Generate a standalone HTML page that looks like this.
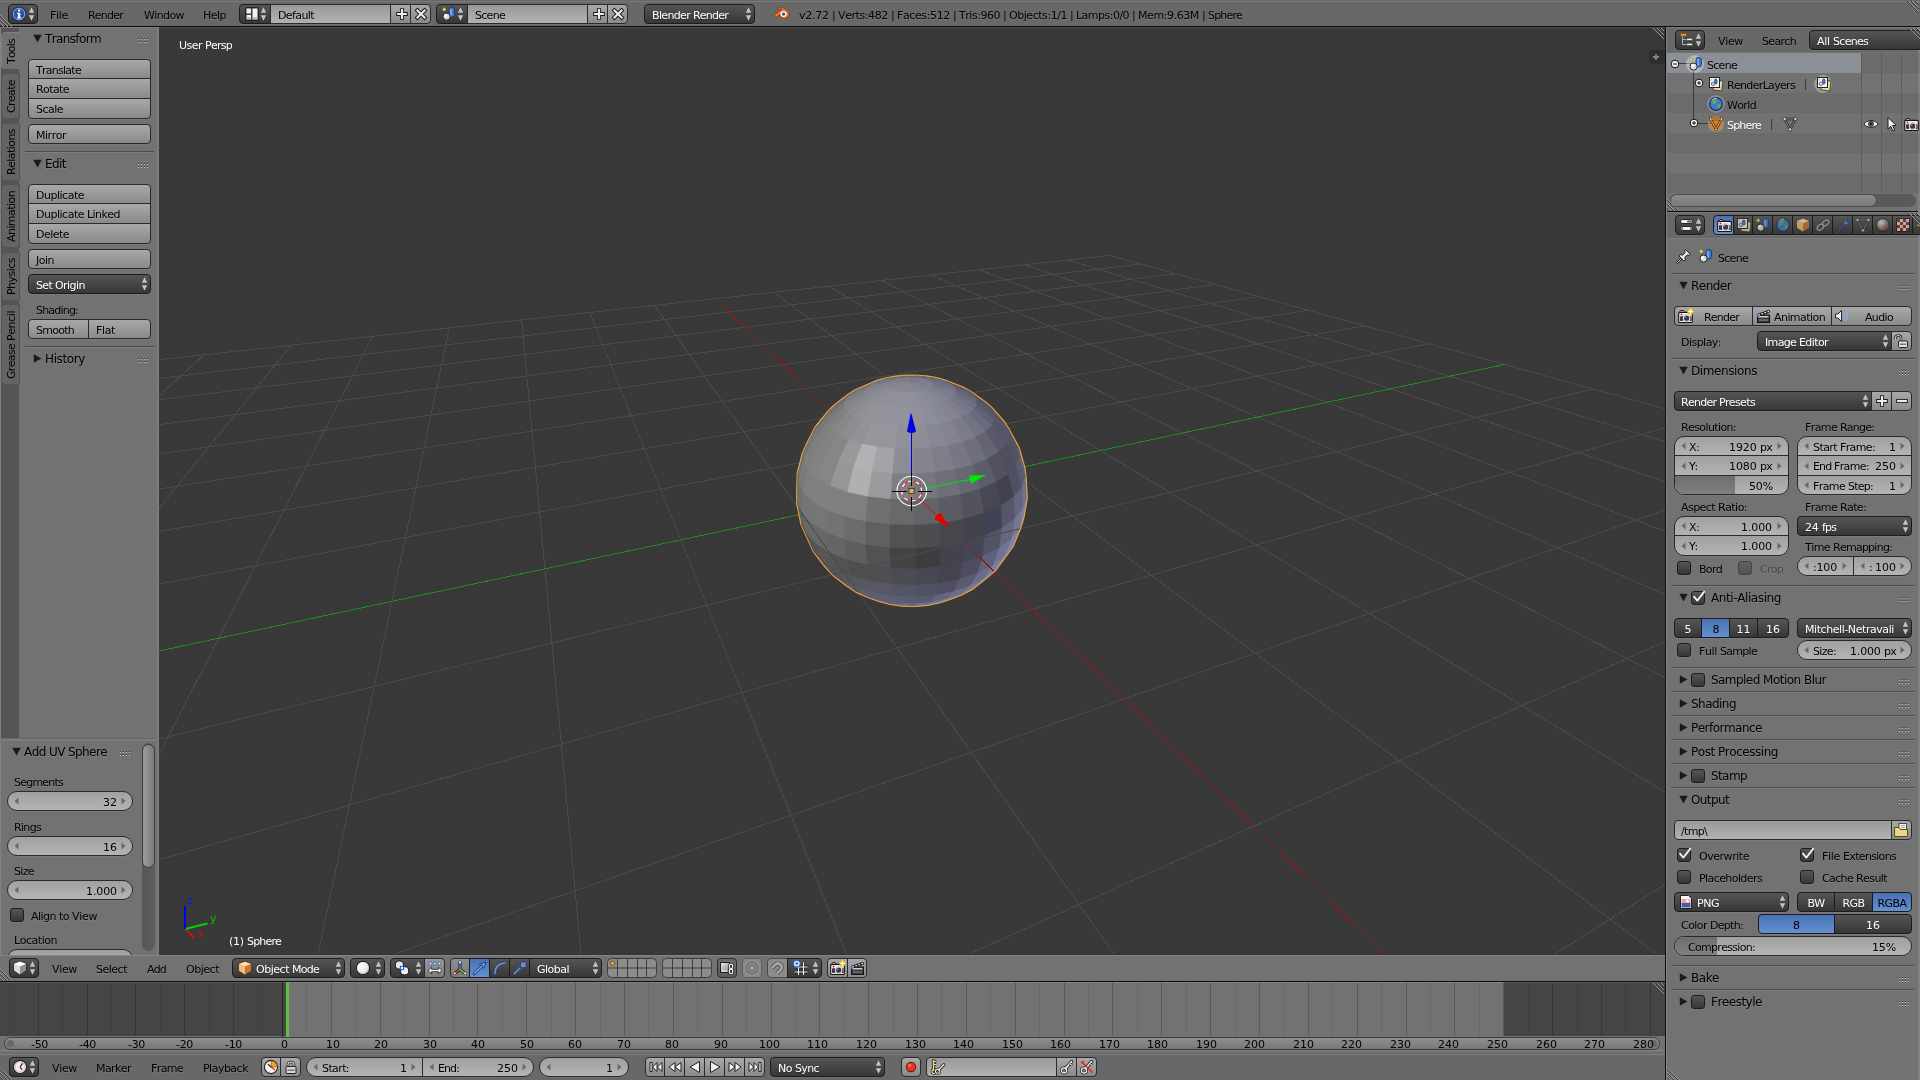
<!DOCTYPE html><html><head><meta charset="utf-8"><title>Blender</title><style>
*{box-sizing:border-box;margin:0;padding:0}
html,body{width:1920px;height:1080px;overflow:hidden;background:#727272}
body{position:relative;font-family:"DejaVu Sans","Liberation Sans",sans-serif;font-size:11px;color:#000;line-height:1;font-kerning:none;font-variant-ligatures:none;white-space:pre}
.a{position:absolute}
.t{position:absolute;white-space:nowrap;line-height:13px;height:13px;text-shadow:0 1px 0 rgba(255,255,255,.12)}
.tw{color:#fff;text-shadow:0 1px 0 rgba(0,0,0,.25)}
.ph{font-size:12px;line-height:14px;height:14px}
.w{position:absolute;border:1px solid #2a2a2a;border-radius:4px;white-space:nowrap;overflow:hidden;box-shadow:0 1px 0 rgba(255,255,255,.06)}
.tool{background:linear-gradient(#a8a8a8,#8a8a8a)}
.menu{background:linear-gradient(#555,#373737);border-color:#1c1c1c;color:#fff}
.radio{background:linear-gradient(#555,#373737);border-color:#1c1c1c;color:#fff}
.radio.sel{background:linear-gradient(#4771b3,#6590d1);color:#000}
.num{background:linear-gradient(#a0a0a0,#b4b4b4);border-radius:10px}
.txt{background:linear-gradient(#999,#b2b2b2)}
.opt{background:linear-gradient(#555,#373737);border-color:#1c1c1c;border-radius:3px}
.icb{background:linear-gradient(#a8a8a8,#8a8a8a)}
.rl{border-top-right-radius:0;border-bottom-right-radius:0}
.rr{border-top-left-radius:0;border-bottom-left-radius:0}
.rn{border-radius:0}
.rt{border-bottom-left-radius:0;border-bottom-right-radius:0}
.rb{border-top-left-radius:0;border-top-right-radius:0}
.hl{position:absolute;height:1px;background:#4c4c4c;box-shadow:0 1px 0 rgba(255,255,255,.09)}
svg{position:absolute;overflow:visible}
i{font-style:normal}.ka{letter-spacing:-0.51px}.kb{letter-spacing:-0.73px}.kc{letter-spacing:-0.27px}.kd{letter-spacing:-0.83px}.ke{letter-spacing:-0.30px}.kf{letter-spacing:-0.78px}.kg{letter-spacing:-0.60px}.kh{letter-spacing:-0.52px}.ki{letter-spacing:-0.71px}.kj{letter-spacing:-0.64px}.kk{letter-spacing:-0.25px}.kl{letter-spacing:-0.41px}.km{letter-spacing:-0.38px}.kn{letter-spacing:-0.47px}.ko{letter-spacing:-0.46px}.kp{letter-spacing:-0.42px}.kq{letter-spacing:-0.79px}.kr{letter-spacing:-0.63px}.ks{letter-spacing:-0.56px}.kt{letter-spacing:-0.53px}.ku{letter-spacing:-0.65px}.kv{letter-spacing:-0.58px}.kw{letter-spacing:-0.49px}.kx{letter-spacing:-0.55px}.ky{letter-spacing:-0.50px}.kz{letter-spacing:-0.54px}.kaa{letter-spacing:-0.80px}.kab{letter-spacing:-0.74px}.kac{letter-spacing:-0.36px}.kad{letter-spacing:-0.59px}.kae{letter-spacing:0.00px}.kaf{letter-spacing:-0.68px}.kag{letter-spacing:-0.10px}.kah{letter-spacing:-0.34px}.kai{letter-spacing:-0.32px}.kaj{letter-spacing:-0.57px}.kak{letter-spacing:-0.61px}.kal{letter-spacing:-0.90px}.kam{letter-spacing:-0.67px}.kan{letter-spacing:-0.28px}.kao{letter-spacing:-0.66px}.kap{letter-spacing:-0.40px}.kaq{letter-spacing:-0.62px}.kar{letter-spacing:-0.75px}.kas{letter-spacing:-1.21px}.kat{letter-spacing:-0.15px}.kau{letter-spacing:-0.85px}.kav{letter-spacing:-0.16px}.kaw{letter-spacing:-0.86px}.kax{letter-spacing:-0.18px}.kay{letter-spacing:-0.70px}.kaz{letter-spacing:-0.43px}.kba{letter-spacing:-0.69px}.kbb{letter-spacing:-0.48px}</style></head><body><div id="root" style="position:absolute;left:0;top:0;width:1920px;height:1080px;will-change:transform">
<div class="a" style="left:0px;top:0px;width:1920px;height:26px;background:#686868;"></div>
<div class="a" style="left:0px;top:1px;width:1920px;height:1px;background:#7a7a7a;"></div>
<div class="a" style="left:0px;top:26px;width:1920px;height:1px;background:#0c0c0c;"></div>
<div class="a" style="left:0px;top:27px;width:1665px;height:928px;background:#727272;"></div>
<svg class="vp" style="position:absolute;left:159px;top:27px;overflow:hidden;background:#393939" width="1506" height="928" viewBox="159 27 1506 928">
<g shape-rendering="crispEdges" stroke-width="1" fill="none">
<path d="M111.8 364.9L1109.7 255.4M111.8 364.9L-65781.7 47569.4M80.2 387.5L1141.2 264.1M204.3 354.7L-50133.6 45980.8M43.0 414.2L1176.1 273.8M291.1 345.2L-35372.7 44482.2M-1.4 446.0L1215.1 284.6M372.6 336.3L-21425.4 43066.3M-55.5 484.7L1258.8 296.6M449.3 327.9L-8226.3 41726.3M-122.5 532.8L1308.3 310.3M521.6 319.9L4283.1 40456.3M-208.0 594.0L1364.6 325.9M589.9 312.4L16155.7 39251.0M-320.8 674.8L1429.4 343.7M654.5 305.4L7273.9 9647.2M-704.4 949.6L1593.1 389.0M773.8 292.3L4257.3 2902.1M-1071.8 1212.8L1698.7 418.1M829.0 286.2L3925.6 2160.5M-1761.8 1707.1L1826.8 453.5M881.5 280.5L3730.8 1725.0M-3531.8 2975.1L1985.7 497.4M931.4 275.0L3602.7 1438.5M-18048.6 13374.6L2187.7 553.2M979.1 269.8L3512.0 1235.7M-42452.0 49611.5L2453.3 626.6M1024.6 264.8L3444.4 1084.6M-10554.2 56060.9L2818.1 727.4M1068.1 260.0L3392.1 967.6M24892.8 49042.5L3350.4 874.4M1109.7 255.4L3350.4 874.4" stroke="#4a4a4a"/>
<path d="M715.7 298.6L4948.4 4447.4" stroke="#8b1a1a"/>
<path d="M-476.3 786.2L1504.6 364.5" stroke="#1e8c1e"/>
</g>
<polygon points="797.5,493.6 798.0,473.4 803.1,453.4 806.9,445.0 815.9,427.2 828.8,411.4 834.4,405.8 849.6,394.1 856.0,390.2 872.1,383.3 877.7,380.9 884.5,379.0 892.1,377.5 900.4,376.5 908.9,376.0 917.6,376.1 925.9,376.7 933.8,377.9 940.8,379.5 946.8,381.6 962.6,387.8 969.5,391.4 984.7,402.3 991.0,407.6 1004.2,422.7 1008.6,429.8 1018.5,448.2 1024.1,467.8 1025.3,477.3 1026.5,497.9 1023.1,517.8 1019.9,528.2 1012.4,546.2 1001.3,561.5 994.6,570.5 981.3,581.3 972.4,588.4 960.9,594.4 949.9,598.6 939.2,602.2 927.4,604.6 914.9,605.7 902.3,605.3 890.2,603.6 879.2,600.6 868.8,597.0 856.5,591.6 846.8,585.1 833.5,574.9 825.6,566.3 814.1,551.5 809.6,541.6 801.6,523.6 797.6,503.8" fill="#8a8a90" stroke="#f6a43c" stroke-width="2.8" stroke-linejoin="round"/>
<g shape-rendering="crispEdges" stroke-width="0.7" stroke-linejoin="round">
<polygon points="910.1,382.1 900.7,377.5 896.7,378.3" fill="#7c7c88" stroke="#7c7c88"/>
<polygon points="910.1,382.1 896.7,378.3 893.2,379.3" fill="#7d7d89" stroke="#7d7d89"/>
<polygon points="910.1,382.1 893.2,379.3 890.3,380.5" fill="#7f7f8a" stroke="#7f7f8a"/>
<polygon points="910.1,382.1 890.3,380.5 888.2,381.8" fill="#80808c" stroke="#80808c"/>
<polygon points="910.1,382.1 888.2,381.8 886.9,383.3" fill="#81818d" stroke="#81818d"/>
<polygon points="910.1,382.1 886.9,383.3 886.4,384.9" fill="#83838e" stroke="#83838e"/>
<polygon points="910.1,382.1 886.4,384.9 886.9,386.4" fill="#84848f" stroke="#84848f"/>
<polygon points="910.1,382.1 886.9,386.4 888.3,387.8" fill="#858591" stroke="#858591"/>
<polygon points="910.1,382.1 888.3,387.8 890.5,389.2" fill="#868692" stroke="#868692"/>
<polygon points="910.1,382.1 890.5,389.2 893.5,390.3" fill="#878793" stroke="#878793"/>
<polygon points="910.1,382.1 893.5,390.3 897.2,391.3" fill="#888894" stroke="#888894"/>
<polygon points="910.1,382.1 897.2,391.3 901.5,391.9" fill="#888894" stroke="#888894"/>
<polygon points="910.1,382.1 901.5,391.9 906.0,392.3" fill="#888894" stroke="#888894"/>
<polygon points="910.1,382.1 906.0,392.3 910.8,392.3" fill="#888894" stroke="#888894"/>
<polygon points="910.1,382.1 910.8,392.3 915.5,392.1" fill="#878794" stroke="#878794"/>
<polygon points="910.1,382.1 915.5,392.1 920.0,391.5" fill="#868794" stroke="#868794"/>
<polygon points="910.1,382.1 920.0,391.5 924.1,390.6" fill="#858693" stroke="#858693"/>
<polygon points="910.1,382.1 924.1,390.6 927.6,389.5" fill="#848592" stroke="#848592"/>
<polygon points="910.1,382.1 927.6,389.5 930.4,388.3" fill="#838391" stroke="#838391"/>
<polygon points="910.1,382.1 930.4,388.3 932.4,386.8" fill="#828290" stroke="#828290"/>
<polygon points="910.1,382.1 932.4,386.8 933.5,385.3" fill="#80808e" stroke="#80808e"/>
<polygon points="910.1,382.1 933.5,385.3 933.7,383.8" fill="#7f7f8d" stroke="#7f7f8d"/>
<polygon points="910.1,382.1 933.7,383.8 933.0,382.3" fill="#7e7e8c" stroke="#7e7e8c"/>
<polygon points="910.1,382.1 933.0,382.3 931.5,380.9" fill="#7c7d8b" stroke="#7c7d8b"/>
<polygon points="910.1,382.1 931.5,380.9 929.1,379.6" fill="#7b7c89" stroke="#7b7c89"/>
<polygon points="910.1,382.1 929.1,379.6 926.0,378.5" fill="#7b7b89" stroke="#7b7b89"/>
<polygon points="910.1,382.1 926.0,378.5 922.4,377.7" fill="#7a7a88" stroke="#7a7a88"/>
<polygon points="910.1,382.1 922.4,377.7 918.3,377.1" fill="#7a7a87" stroke="#7a7a87"/>
<polygon points="910.1,382.1 918.3,377.1 914.0,376.7" fill="#7a7a87" stroke="#7a7a87"/>
<polygon points="910.1,382.1 914.0,376.7 909.4,376.7" fill="#7a7a87" stroke="#7a7a87"/>
<polygon points="910.1,382.1 909.4,376.7 905.0,376.9" fill="#7a7b87" stroke="#7a7b87"/>
<polygon points="910.1,382.1 905.0,376.9 900.7,377.5" fill="#7b7b88" stroke="#7b7b88"/>
<polygon points="900.7,377.5 892.1,377.5 884.5,379.0 896.7,378.3" fill="#6e6e78" stroke="#6e6e78"/>
<polygon points="896.7,378.3 884.5,379.0 877.7,380.9 893.2,379.3" fill="#71717b" stroke="#71717b"/>
<polygon points="893.2,379.3 877.7,380.9 872.1,383.3 890.3,380.5" fill="#75757e" stroke="#75757e"/>
<polygon points="890.3,380.5 872.1,383.3 867.8,386.0 888.2,381.8" fill="#797982" stroke="#797982"/>
<polygon points="888.2,381.8 867.8,386.0 865.0,388.9 886.9,383.3" fill="#7d7d86" stroke="#7d7d86"/>
<polygon points="886.9,383.3 865.0,388.9 863.9,391.9 886.4,384.9" fill="#81828a" stroke="#81828a"/>
<polygon points="886.4,384.9 863.9,391.9 864.6,395.0 886.9,386.4" fill="#85858e" stroke="#85858e"/>
<polygon points="886.9,386.4 864.6,395.0 867.1,397.9 888.3,387.8" fill="#898991" stroke="#898991"/>
<polygon points="888.3,387.8 867.1,397.9 871.4,400.7 890.5,389.2" fill="#8c8c95" stroke="#8c8c95"/>
<polygon points="890.5,389.2 871.4,400.7 877.3,403.1 893.5,390.3" fill="#8e8e97" stroke="#8e8e97"/>
<polygon points="893.5,390.3 877.3,403.1 884.5,405.0 897.2,391.3" fill="#90909a" stroke="#90909a"/>
<polygon points="897.2,391.3 884.5,405.0 892.9,406.4 901.5,391.9" fill="#91919b" stroke="#91919b"/>
<polygon points="901.5,391.9 892.9,406.4 902.1,407.2 906.0,392.3" fill="#91919c" stroke="#91919c"/>
<polygon points="906.0,392.3 902.1,407.2 911.6,407.3 910.8,392.3" fill="#90909c" stroke="#90909c"/>
<polygon points="910.8,392.3 911.6,407.3 921.0,406.7 915.5,392.1" fill="#8f8f9c" stroke="#8f8f9c"/>
<polygon points="915.5,392.1 921.0,406.7 930.0,405.5 920.0,391.5" fill="#8c8d9a" stroke="#8c8d9a"/>
<polygon points="920.0,391.5 930.0,405.5 938.1,403.8 924.1,390.6" fill="#8a8a98" stroke="#8a8a98"/>
<polygon points="924.1,390.6 938.1,403.8 945.0,401.5 927.6,389.5" fill="#868695" stroke="#868695"/>
<polygon points="927.6,389.5 945.0,401.5 950.4,398.9 930.4,388.3" fill="#828392" stroke="#828392"/>
<polygon points="930.4,388.3 950.4,398.9 954.2,395.9 932.4,386.8" fill="#7e7f8e" stroke="#7e7f8e"/>
<polygon points="932.4,386.8 954.2,395.9 956.2,392.9 933.5,385.3" fill="#7a7b8b" stroke="#7a7b8b"/>
<polygon points="933.5,385.3 956.2,392.9 956.3,389.8 933.7,383.8" fill="#767687" stroke="#767687"/>
<polygon points="933.7,383.8 956.3,389.8 954.8,386.8 933.0,382.3" fill="#727383" stroke="#727383"/>
<polygon points="933.0,382.3 954.8,386.8 951.5,384.1 931.5,380.9" fill="#6f6f7f" stroke="#6f6f7f"/>
<polygon points="931.5,380.9 951.5,384.1 946.8,381.6 929.1,379.6" fill="#6c6c7c" stroke="#6c6c7c"/>
<polygon points="929.1,379.6 946.8,381.6 940.8,379.5 926.0,378.5" fill="#696a79" stroke="#696a79"/>
<polygon points="926.0,378.5 940.8,379.5 933.8,377.9 922.4,377.7" fill="#686877" stroke="#686877"/>
<polygon points="922.4,377.7 933.8,377.9 925.9,376.7 918.3,377.1" fill="#676775" stroke="#676775"/>
<polygon points="918.3,377.1 925.9,376.7 917.6,376.1 914.0,376.7" fill="#676774" stroke="#676774"/>
<polygon points="914.0,376.7 917.6,376.1 908.9,376.0 909.4,376.7" fill="#676874" stroke="#676874"/>
<polygon points="909.4,376.7 908.9,376.0 900.4,376.5 905.0,376.9" fill="#696975" stroke="#696975"/>
<polygon points="905.0,376.9 900.4,376.5 892.1,377.5 900.7,377.5" fill="#6b6b76" stroke="#6b6b76"/>
<polygon points="872.1,383.3 856.0,390.2 849.6,394.1 867.8,386.0" fill="#6e6e73" stroke="#6e6e73"/>
<polygon points="867.8,386.0 849.6,394.1 845.4,398.4 865.0,388.9" fill="#747579" stroke="#747579"/>
<polygon points="865.0,388.9 845.4,398.4 843.6,402.9 863.9,391.9" fill="#7b7b80" stroke="#7b7b80"/>
<polygon points="863.9,391.9 843.6,402.9 844.3,407.5 864.6,395.0" fill="#818186" stroke="#818186"/>
<polygon points="864.6,395.0 844.3,407.5 847.6,412.0 867.1,397.9" fill="#87878c" stroke="#87878c"/>
<polygon points="867.1,397.9 847.6,412.0 853.6,416.2 871.4,400.7" fill="#8c8c91" stroke="#8c8c91"/>
<polygon points="871.4,400.7 853.6,416.2 862.0,419.9 877.3,403.1" fill="#909096" stroke="#909096"/>
<polygon points="877.3,403.1 862.0,419.9 872.6,422.9 884.5,405.0" fill="#93939a" stroke="#93939a"/>
<polygon points="884.5,405.0 872.6,422.9 884.9,425.1 892.9,406.4" fill="#94949c" stroke="#94949c"/>
<polygon points="892.9,406.4 884.9,425.1 898.4,426.3 902.1,407.2" fill="#94949e" stroke="#94949e"/>
<polygon points="902.1,407.2 898.4,426.3 912.4,426.5 911.6,407.3" fill="#93939e" stroke="#93939e"/>
<polygon points="911.6,407.3 912.4,426.5 926.4,425.6 921.0,406.7" fill="#91919d" stroke="#91919d"/>
<polygon points="921.0,406.7 926.4,425.6 939.6,423.8 930.0,405.5" fill="#8d8d9b" stroke="#8d8d9b"/>
<polygon points="930.0,405.5 939.6,423.8 951.4,421.0 938.1,403.8" fill="#888997" stroke="#888997"/>
<polygon points="938.1,403.8 951.4,421.0 961.4,417.6 945.0,401.5" fill="#838393" stroke="#838393"/>
<polygon points="945.0,401.5 961.4,417.6 969.1,413.5 950.4,398.9" fill="#7d7d8e" stroke="#7d7d8e"/>
<polygon points="950.4,398.9 969.1,413.5 974.4,409.1 954.2,395.9" fill="#767788" stroke="#767788"/>
<polygon points="954.2,395.9 974.4,409.1 977.0,404.5 956.2,392.9" fill="#707081" stroke="#707081"/>
<polygon points="956.2,392.9 977.0,404.5 976.9,399.9 956.3,389.8" fill="#69697b" stroke="#69697b"/>
<polygon points="956.3,389.8 976.9,399.9 974.4,395.4 954.8,386.8" fill="#636375" stroke="#636375"/>
<polygon points="954.8,386.8 974.4,395.4 969.5,391.4 951.5,384.1" fill="#5d5d6f" stroke="#5d5d6f"/>
<polygon points="951.5,384.1 969.5,391.4 962.6,387.8 946.8,381.6" fill="#585869" stroke="#585869"/>
<polygon points="849.6,394.1 834.4,405.8 828.8,411.4 845.4,398.4" fill="#676768" stroke="#676768"/>
<polygon points="845.4,398.4 828.8,411.4 826.2,417.4 843.6,402.9" fill="#707071" stroke="#707071"/>
<polygon points="843.6,402.9 826.2,417.4 826.8,423.4 844.3,407.5" fill="#797979" stroke="#797979"/>
<polygon points="844.3,407.5 826.8,423.4 830.8,429.4 847.6,412.0" fill="#808082" stroke="#808082"/>
<polygon points="847.6,412.0 830.8,429.4 838.1,435.1 853.6,416.2" fill="#878789" stroke="#878789"/>
<polygon points="853.6,416.2 838.1,435.1 848.6,440.1 862.0,419.9" fill="#8c8c8f" stroke="#8c8c8f"/>
<polygon points="862.0,419.9 848.6,440.1 862.1,444.2 872.6,422.9" fill="#929296" stroke="#929296"/>
<polygon points="872.6,422.9 862.1,444.2 877.8,447.1 884.9,425.1" fill="#96969c" stroke="#96969c"/>
<polygon points="884.9,425.1 877.8,447.1 895.1,448.8 898.4,426.3" fill="#95959c" stroke="#95959c"/>
<polygon points="898.4,426.3 895.1,448.8 913.2,449.1 912.4,426.5" fill="#91919a" stroke="#91919a"/>
<polygon points="912.4,426.5 913.2,449.1 931.2,447.9 926.4,425.6" fill="#8d8d98" stroke="#8d8d98"/>
<polygon points="926.4,425.6 931.2,447.9 948.2,445.4 939.6,423.8" fill="#888895" stroke="#888895"/>
<polygon points="939.6,423.8 948.2,445.4 963.3,441.7 951.4,421.0" fill="#828290" stroke="#828290"/>
<polygon points="951.4,421.0 963.3,441.7 975.9,437.0 961.4,417.6" fill="#7b7b8b" stroke="#7b7b8b"/>
<polygon points="961.4,417.6 975.9,437.0 985.6,431.5 969.1,413.5" fill="#727383" stroke="#727383"/>
<polygon points="969.1,413.5 985.6,431.5 992.0,425.6 974.4,409.1" fill="#6a6a7c" stroke="#6a6a7c"/>
<polygon points="974.4,409.1 992.0,425.6 994.9,419.5 977.0,404.5" fill="#606173" stroke="#606173"/>
<polygon points="977.0,404.5 994.9,419.5 994.6,413.4 976.9,399.9" fill="#58586b" stroke="#58586b"/>
<polygon points="976.9,399.9 994.6,413.4 991.0,407.6 974.4,395.4" fill="#555668" stroke="#555668"/>
<polygon points="974.4,395.4 991.0,407.6 984.7,402.3 969.5,391.4" fill="#545466" stroke="#545466"/>
<polygon points="828.8,411.4 815.9,427.2 812.5,434.4 826.2,417.4" fill="#6d6d6d" stroke="#6d6d6d"/>
<polygon points="826.2,417.4 812.5,434.4 813.0,441.9 826.8,423.4" fill="#787878" stroke="#787878"/>
<polygon points="826.8,423.4 813.0,441.9 817.3,449.3 830.8,429.4" fill="#7f7f7f" stroke="#7f7f7f"/>
<polygon points="830.8,429.4 817.3,449.3 825.7,456.3 838.1,435.1" fill="#838383" stroke="#838383"/>
<polygon points="838.1,435.1 825.7,456.3 837.9,462.6 848.6,440.1" fill="#868686" stroke="#868686"/>
<polygon points="848.6,440.1 837.9,462.6 853.6,467.8 862.1,444.2" fill="#99999a" stroke="#99999a"/>
<polygon points="862.1,444.2 853.6,467.8 872.1,471.5 877.8,447.1" fill="#b2b2b5" stroke="#b2b2b5"/>
<polygon points="877.8,447.1 872.1,471.5 892.6,473.7 895.1,448.8" fill="#a3a3a8" stroke="#a3a3a8"/>
<polygon points="895.1,448.8 892.6,473.7 914.0,474.0 913.2,449.1" fill="#8c8c94" stroke="#8c8c94"/>
<polygon points="913.2,449.1 914.0,474.0 935.3,472.6 931.2,447.9" fill="#84848e" stroke="#84848e"/>
<polygon points="931.2,447.9 935.3,472.6 955.3,469.5 948.2,445.4" fill="#7e7e8a" stroke="#7e7e8a"/>
<polygon points="948.2,445.4 955.3,469.5 973.1,464.8 963.3,441.7" fill="#777784" stroke="#777784"/>
<polygon points="963.3,441.7 973.1,464.8 987.8,458.9 975.9,437.0" fill="#6e6e7d" stroke="#6e6e7d"/>
<polygon points="975.9,437.0 987.8,458.9 998.9,452.1 985.6,431.5" fill="#646474" stroke="#646474"/>
<polygon points="985.6,431.5 998.9,452.1 1006.1,444.7 992.0,425.6" fill="#59596b" stroke="#59596b"/>
<polygon points="992.0,425.6 1006.1,444.7 1009.3,437.2 994.9,419.5" fill="#555567" stroke="#555567"/>
<polygon points="994.9,419.5 1009.3,437.2 1008.6,429.8 994.6,413.4" fill="#565769" stroke="#565769"/>
<polygon points="994.6,413.4 1008.6,429.8 1004.2,422.7 991.0,407.6" fill="#565669" stroke="#565669"/>
<polygon points="815.9,427.2 806.9,445.0 803.1,453.4 812.5,434.4" fill="#6b6b6b" stroke="#6b6b6b"/>
<polygon points="812.5,434.4 803.1,453.4 803.3,462.1 813.0,441.9" fill="#767676" stroke="#767676"/>
<polygon points="813.0,441.9 803.3,462.1 807.9,470.8 817.3,449.3" fill="#7f7f7f" stroke="#7f7f7f"/>
<polygon points="817.3,449.3 807.9,470.8 816.9,479.0 825.7,456.3" fill="#838383" stroke="#838383"/>
<polygon points="825.7,456.3 816.9,479.0 830.3,486.3 837.9,462.6" fill="#868686" stroke="#868686"/>
<polygon points="837.9,462.6 830.3,486.3 847.6,492.4 853.6,467.8" fill="#969696" stroke="#969696"/>
<polygon points="853.6,467.8 847.6,492.4 868.1,496.9 872.1,471.5" fill="#b0b0b0" stroke="#b0b0b0"/>
<polygon points="872.1,471.5 868.1,496.9 890.8,499.4 892.6,473.7" fill="#9b9b9d" stroke="#9b9b9d"/>
<polygon points="892.6,473.7 890.8,499.4 914.7,499.9 914.0,474.0" fill="#7e7f84" stroke="#7e7f84"/>
<polygon points="914.0,474.0 914.7,499.9 938.3,498.2 935.3,472.6" fill="#76767e" stroke="#76767e"/>
<polygon points="935.3,472.6 938.3,498.2 960.6,494.5 955.3,469.5" fill="#6f6f79" stroke="#6f6f79"/>
<polygon points="955.3,469.5 960.6,494.5 980.2,489.0 973.1,464.8" fill="#676773" stroke="#676773"/>
<polygon points="973.1,464.8 980.2,489.0 996.4,482.1 987.8,458.9" fill="#5c5d6b" stroke="#5c5d6b"/>
<polygon points="987.8,458.9 996.4,482.1 1008.6,474.2 998.9,452.1" fill="#515161" stroke="#515161"/>
<polygon points="998.9,452.1 1008.6,474.2 1016.3,465.6 1006.1,444.7" fill="#4e4e5f" stroke="#4e4e5f"/>
<polygon points="1006.1,444.7 1016.3,465.6 1019.6,456.8 1009.3,437.2" fill="#525264" stroke="#525264"/>
<polygon points="1009.3,437.2 1019.6,456.8 1018.5,448.2 1008.6,429.8" fill="#545466" stroke="#545466"/>
<polygon points="803.1,453.4 798.0,473.4 798.2,483.1 803.3,462.1" fill="#717171" stroke="#717171"/>
<polygon points="803.3,462.1 798.2,483.1 802.9,492.6 807.9,470.8" fill="#7a7a7a" stroke="#7a7a7a"/>
<polygon points="807.9,470.8 802.9,492.6 812.3,501.8 816.9,479.0" fill="#7f7f7f" stroke="#7f7f7f"/>
<polygon points="816.9,479.0 812.3,501.8 826.3,510.0 830.3,486.3" fill="#808080" stroke="#808080"/>
<polygon points="830.3,486.3 826.3,510.0 844.4,516.8 847.6,492.4" fill="#808080" stroke="#808080"/>
<polygon points="847.6,492.4 844.4,516.8 866.0,521.8 868.1,496.9" fill="#7f7f7f" stroke="#7f7f7f"/>
<polygon points="868.1,496.9 866.0,521.8 890.1,524.7 890.8,499.4" fill="#707070" stroke="#707070"/>
<polygon points="890.8,499.4 890.1,524.7 915.2,525.3 914.7,499.9" fill="#69696c" stroke="#69696c"/>
<polygon points="914.7,499.9 915.2,525.3 940.2,523.4 938.3,498.2" fill="#636469" stroke="#636469"/>
<polygon points="938.3,498.2 940.2,523.4 963.6,519.3 960.6,494.5" fill="#5c5c64" stroke="#5c5c64"/>
<polygon points="960.6,494.5 963.6,519.3 984.3,513.2 980.2,489.0" fill="#53535d" stroke="#53535d"/>
<polygon points="980.2,489.0 984.3,513.2 1001.3,505.5 996.4,482.1" fill="#484854" stroke="#484854"/>
<polygon points="996.4,482.1 1001.3,505.5 1014.0,496.6 1008.6,474.2" fill="#41414f" stroke="#41414f"/>
<polygon points="1008.6,474.2 1014.0,496.6 1022.0,487.1 1016.3,465.6" fill="#4f5062" stroke="#4f5062"/>
<polygon points="1016.3,465.6 1022.0,487.1 1025.3,477.3 1019.6,456.8" fill="#5b5b70" stroke="#5b5b70"/>
<polygon points="1019.6,456.8 1025.3,477.3 1024.1,467.8 1018.5,448.2" fill="#616278" stroke="#616278"/>
<polygon points="798.0,473.4 797.5,493.6 797.6,503.8 798.2,483.1" fill="#676767" stroke="#676767"/>
<polygon points="798.2,483.1 797.6,503.8 802.4,514.0 802.9,492.6" fill="#707070" stroke="#707070"/>
<polygon points="802.9,492.6 802.4,514.0 811.8,523.7 812.3,501.8" fill="#757575" stroke="#757575"/>
<polygon points="812.3,501.8 811.8,523.7 825.9,532.4 826.3,510.0" fill="#767676" stroke="#767676"/>
<polygon points="826.3,510.0 825.9,532.4 844.2,539.7 844.4,516.8" fill="#737373" stroke="#737373"/>
<polygon points="844.4,516.8 844.2,539.7 866.0,545.0 866.0,521.8" fill="#6c6c6c" stroke="#6c6c6c"/>
<polygon points="866.0,521.8 866.0,545.0 890.2,548.1 890.1,524.7" fill="#606060" stroke="#606060"/>
<polygon points="890.1,524.7 890.2,548.1 915.6,548.7 915.2,525.3" fill="#525252" stroke="#525252"/>
<polygon points="915.2,525.3 915.6,548.7 940.8,546.7 940.2,523.4" fill="#4d4d50" stroke="#4d4d50"/>
<polygon points="940.2,523.4 940.8,546.7 964.4,542.4 963.6,519.3" fill="#46464b" stroke="#46464b"/>
<polygon points="963.6,519.3 964.4,542.4 985.2,535.9 984.3,513.2" fill="#42424c" stroke="#42424c"/>
<polygon points="984.3,513.2 985.2,535.9 1002.4,527.8 1001.3,505.5" fill="#424352" stroke="#424352"/>
<polygon points="1001.3,505.5 1002.4,527.8 1015.1,518.4 1014.0,496.6" fill="#545669" stroke="#545669"/>
<polygon points="1014.0,496.6 1015.1,518.4 1023.2,508.3 1022.0,487.1" fill="#64667d" stroke="#64667d"/>
<polygon points="1022.0,487.1 1023.2,508.3 1026.5,497.9 1025.3,477.3" fill="#70728c" stroke="#70728c"/>
<polygon points="797.6,503.8 801.6,523.6 806.2,533.9 802.4,514.0" fill="#626262" stroke="#626262"/>
<polygon points="802.4,514.0 806.2,533.9 815.5,543.7 811.8,523.7" fill="#676767" stroke="#676767"/>
<polygon points="811.8,523.7 815.5,543.7 829.2,552.5 825.9,532.4" fill="#686868" stroke="#686868"/>
<polygon points="825.9,532.4 829.2,552.5 846.9,559.9 844.2,539.7" fill="#656565" stroke="#656565"/>
<polygon points="844.2,539.7 846.9,559.9 867.9,565.3 866.0,545.0" fill="#5e5e5e" stroke="#5e5e5e"/>
<polygon points="866.0,545.0 867.9,565.3 891.3,568.4 890.2,548.1" fill="#525252" stroke="#525252"/>
<polygon points="890.2,548.1 891.3,568.4 915.8,569.0 915.6,548.7" fill="#444444" stroke="#444444"/>
<polygon points="915.6,548.7 915.8,569.0 940.1,567.0 940.8,546.7" fill="#3d3d40" stroke="#3d3d40"/>
<polygon points="940.8,546.7 940.1,567.0 962.9,562.7 964.4,542.4" fill="#42434b" stroke="#42434b"/>
<polygon points="964.4,542.4 962.9,562.7 983.1,556.2 985.2,535.9" fill="#454655" stroke="#454655"/>
<polygon points="985.2,535.9 983.1,556.2 999.6,547.9 1002.4,527.8" fill="#525467" stroke="#525467"/>
<polygon points="1002.4,527.8 999.6,547.9 1012.0,538.4 1015.1,518.4" fill="#656780" stroke="#656780"/>
<polygon points="1015.1,518.4 1012.0,538.4 1019.9,528.2 1023.2,508.3" fill="#757893" stroke="#757893"/>
<polygon points="1023.2,508.3 1019.9,528.2 1023.1,517.8 1026.5,497.9" fill="#8083a2" stroke="#8083a2"/>
<polygon points="801.6,523.6 809.6,541.6 814.1,551.5 806.2,533.9" fill="#505050" stroke="#505050"/>
<polygon points="806.2,533.9 814.1,551.5 822.8,561.0 815.5,543.7" fill="#555555" stroke="#555555"/>
<polygon points="815.5,543.7 822.8,561.0 835.6,569.5 829.2,552.5" fill="#565656" stroke="#565656"/>
<polygon points="829.2,552.5 835.6,569.5 852.1,576.5 846.9,559.9" fill="#535353" stroke="#535353"/>
<polygon points="846.9,559.9 852.1,576.5 871.6,581.7 867.9,565.3" fill="#4e4f4f" stroke="#4e4f4f"/>
<polygon points="867.9,565.3 871.6,581.7 893.2,584.6 891.3,568.4" fill="#4e4f52" stroke="#4e4f52"/>
<polygon points="891.3,568.4 893.2,584.6 915.8,585.2 915.8,569.0" fill="#4b4c53" stroke="#4b4c53"/>
<polygon points="915.8,569.0 915.8,585.2 938.2,583.4 940.1,567.0" fill="#474851" stroke="#474851"/>
<polygon points="940.1,567.0 938.2,583.4 959.3,579.2 962.9,562.7" fill="#444451" stroke="#444451"/>
<polygon points="962.9,562.7 959.3,579.2 978.0,573.0 983.1,556.2" fill="#4d4d5f" stroke="#4d4d5f"/>
<polygon points="983.1,556.2 978.0,573.0 993.4,565.1 999.6,547.9" fill="#60627a" stroke="#60627a"/>
<polygon points="999.6,547.9 993.4,565.1 1005.0,556.0 1012.0,538.4" fill="#727591" stroke="#727591"/>
<polygon points="1012.0,538.4 1005.0,556.0 1012.4,546.2 1019.9,528.2" fill="#8185a4" stroke="#8185a4"/>
<polygon points="814.1,551.5 825.6,566.3 833.5,574.9 822.8,561.0" fill="#4c4d50" stroke="#4c4d50"/>
<polygon points="822.8,561.0 833.5,574.9 844.9,582.6 835.6,569.5" fill="#525357" stroke="#525357"/>
<polygon points="835.6,569.5 844.9,582.6 859.6,589.0 852.1,576.5" fill="#56565c" stroke="#56565c"/>
<polygon points="852.1,576.5 859.6,589.0 876.8,593.6 871.6,581.7" fill="#575860" stroke="#575860"/>
<polygon points="871.6,581.7 876.8,593.6 895.8,596.3 893.2,584.6" fill="#575863" stroke="#575863"/>
<polygon points="893.2,584.6 895.8,596.3 915.7,596.9 915.8,585.2" fill="#545664" stroke="#545664"/>
<polygon points="915.8,585.2 915.7,596.9 935.4,595.2 938.2,583.4" fill="#515263" stroke="#515263"/>
<polygon points="938.2,583.4 935.4,595.2 953.9,591.5 959.3,579.2" fill="#4f4d60" stroke="#4f4d60"/>
<polygon points="959.3,579.2 953.9,591.5 970.4,585.9 978.0,573.0" fill="#5d596f" stroke="#5d596f"/>
<polygon points="978.0,573.0 970.4,585.9 984.2,578.7 993.4,565.1" fill="#6c6d88" stroke="#6c6d88"/>
<polygon points="993.4,565.1 984.2,578.7 994.6,570.5 1005.0,556.0" fill="#7b7f9d" stroke="#7b7f9d"/>
<polygon points="1005.0,556.0 994.6,570.5 1001.3,561.5 1012.4,546.2" fill="#888daf" stroke="#888daf"/>
<polygon points="833.5,574.9 846.8,585.1 856.5,591.6 844.9,582.6" fill="#585a66" stroke="#585a66"/>
<polygon points="844.9,582.6 856.5,591.6 868.8,597.0 859.6,589.0" fill="#5b5d6a" stroke="#5b5d6a"/>
<polygon points="859.6,589.0 868.8,597.0 883.1,600.9 876.8,593.6" fill="#5c5f6e" stroke="#5c5f6e"/>
<polygon points="876.8,593.6 883.1,600.9 898.9,603.2 895.8,596.3" fill="#5c5f70" stroke="#5c5f70"/>
<polygon points="895.8,596.3 898.9,603.2 915.4,603.7 915.7,596.9" fill="#5a5d71" stroke="#5a5d71"/>
<polygon points="915.7,596.9 915.4,603.7 931.7,602.3 935.4,595.2" fill="#575a71" stroke="#575a71"/>
<polygon points="935.4,595.2 931.7,602.3 947.1,599.1 953.9,591.5" fill="#63657e" stroke="#63657e"/>
<polygon points="953.9,591.5 947.1,599.1 960.9,594.4 970.4,585.9" fill="#6d6f8a" stroke="#6d6f8a"/>
<polygon points="970.4,585.9 960.9,594.4 972.4,588.4 984.2,578.7" fill="#757996" stroke="#757996"/>
<polygon points="984.2,578.7 972.4,588.4 981.3,581.3 994.6,570.5" fill="#7e83a4" stroke="#7e83a4"/>
<polygon points="868.8,597.0 879.2,600.6 890.2,603.6 883.1,600.9" fill="#5e6277" stroke="#5e6277"/>
<polygon points="883.1,600.9 890.2,603.6 902.3,605.3 898.9,603.2" fill="#5e6279" stroke="#5e6279"/>
<polygon points="898.9,603.2 902.3,605.3 914.9,605.7 915.4,603.7" fill="#646881" stroke="#646881"/>
<polygon points="915.4,603.7 914.9,605.7 927.4,604.6 931.7,602.3" fill="#6c708b" stroke="#6c708b"/>
<polygon points="931.7,602.3 927.4,604.6 939.2,602.2 947.1,599.1" fill="#747996" stroke="#747996"/>
<polygon points="947.1,599.1 939.2,602.2 949.9,598.6 960.9,594.4" fill="#7c81a1" stroke="#7c81a1"/>
</g>
<g shape-rendering="crispEdges" stroke-width="1" fill="none">
<clipPath id="sph"><polygon points="797.5,493.6 798.0,473.4 803.1,453.4 806.9,445.0 815.9,427.2 828.8,411.4 834.4,405.8 849.6,394.1 856.0,390.2 872.1,383.3 877.7,380.9 884.5,379.0 892.1,377.5 900.4,376.5 908.9,376.0 917.6,376.1 925.9,376.7 933.8,377.9 940.8,379.5 946.8,381.6 962.6,387.8 969.5,391.4 984.7,402.3 991.0,407.6 1004.2,422.7 1008.6,429.8 1018.5,448.2 1024.1,467.8 1025.3,477.3 1026.5,497.9 1023.1,517.8 1019.9,528.2 1012.4,546.2 1001.3,561.5 994.6,570.5 981.3,581.3 972.4,588.4 960.9,594.4 949.9,598.6 939.2,602.2 927.4,604.6 914.9,605.7 902.3,605.3 890.2,603.6 879.2,600.6 868.8,597.0 856.5,591.6 846.8,585.1 833.5,574.9 825.6,566.3 814.1,551.5 809.6,541.6 801.6,523.6 797.6,503.8"/></clipPath>
<g clip-path="url(#sph)">
<path d="M-208.0 594.0L822.3 418.3M972.7 392.7L1364.6 325.9" stroke="#4a4a4a"/>
<path d="M589.9 312.4L23764.5 58284.9" stroke="#4a4a4a"/>
<path d="M-320.8 674.8L799.9 462.8M1006.0 423.8L1429.4 343.7" stroke="#4a4a4a"/>
<path d="M654.5 305.4L7273.9 9647.2" stroke="#4a4a4a"/>
<path d="M-704.4 949.6L1593.1 389.0" stroke="#4a4a4a"/>
<path d="M773.8 292.3L888.1 377.9M1026.5 481.6L4257.3 2902.1" stroke="#4a4a4a"/>
<path d="M-1071.8 1212.8L1698.7 418.1" stroke="#4a4a4a"/>
<path d="M829.0 286.2L3925.6 2160.5" stroke="#4a4a4a"/>
<path d="M715.7 298.6L829.4 410.1M964.4 542.4L4948.4 4447.4" stroke="#8b1a1a"/>
<path d="M-476.3 786.2L802.4 514.0M1024.6 466.7L1504.6 364.5" stroke="#1e8c1e"/>
</g></g>

<g shape-rendering="crispEdges" fill="none" stroke-width="1">
<path d="M911.5 471V431" stroke="#0000e6"/>
<path d="M925 488.5L971 479.2" stroke="#00e600" shape-rendering="auto"/>
<path d="M919 498.5L938 517" stroke="#e60000" shape-rendering="auto"/>
</g>
<path d="M907 431.5L910.6 413.5H911.4L916 431.5C913 433.5 910 433.5 907 431.5z" fill="#0000e6"/>
<path d="M969.5 475.5L986.2 475L971.5 483.5C969.5 481.5 969 478.5 969.5 475.5z" fill="#00e600"/>
<path d="M940.5 512.8L949.8 527.8L934.6 519.2C935.5 516 938 513.5 940.5 512.8z" fill="#e60000"/>
<circle cx="911.7" cy="491" r="14.8" fill="none" stroke="#fff" stroke-width="1.1"/>
<circle cx="911.7" cy="491" r="10" fill="none" stroke="#fff" stroke-width="1.2"/>
<circle cx="911.7" cy="491" r="10" fill="none" stroke="#e61010" stroke-width="1.2" stroke-dasharray="3.93 3.93"/>
<path d="M892 491.5H906.5M917.5 491.5H932M911.5 470.5V485.5M911.5 496.5V511" stroke="#000" stroke-width="1" shape-rendering="crispEdges"/>
<rect x="909" y="488.5" width="5" height="5" fill="#f0aa50" stroke="#3a2a10" stroke-width=".8"/>
<g stroke-width="2" shape-rendering="crispEdges">
<path d="M185 929L195 938.5" stroke="#c81414" shape-rendering="auto"/>
<path d="M185 929L207.5 923.5" stroke="#00d200" shape-rendering="auto"/>
<path d="M185 929V906" stroke="#0000f0"/>
</g>
<g font-family="DejaVu Sans,Liberation Sans,sans-serif" font-size="11">
<text x="187" y="904" fill="#1414f0">z</text>
<text x="210" y="922" fill="#00c800">y</text>
<text x="198" y="937" fill="#c81414">x</text>
</g>

</svg>
<div class="a" style="left:159px;top:27px;width:1506px;height:1px;background:#4e4e4e;"></div>
<div class="t tw" style="left:179px;top:39px;text-shadow:none"><i class="ka">User </i><i class="kb">Persp</i></div>
<div class="t tw" style="left:229px;top:935px;text-shadow:none"><i class="kc">(1) </i><i class="kd">Sphere</i></div>
<div class="a" style="left:0px;top:27px;width:159px;height:712px;background:#727272;"></div>
<div class="a" style="left:0px;top:27px;width:19px;height:712px;background:#555;"></div>
<div class="a" style="left:157px;top:27px;width:2px;height:928px;background:#7b7b7b;"></div>
<div class="a" style="left:0px;top:27px;width:159px;height:1px;background:#7e7e7e;"></div>
<div class="a" style="left:0px;top:738px;width:157px;height:1px;background:#686868;"></div>
<div class="a" style="left:0px;top:739px;width:157px;height:2px;background:#7d7d7d;"></div>
<div class="a" style="left:0px;top:741px;width:157px;height:214px;background:#727272;"></div>
<div class="a" style="left:0px;top:27px;width:1px;height:1053px;background:#818181;"></div>
<div class="a" style="left:0px;top:955px;width:1665px;height:26px;background:#727272;"></div>
<div class="a" style="left:159px;top:954px;width:1506px;height:1px;background:#333;"></div>
<div class="a" style="left:0px;top:955px;width:1665px;height:1px;background:#868686;"></div>
<div class="a" style="left:0px;top:981px;width:1665px;height:1px;background:#0c0c0c;"></div>
<div class="a" style="left:0px;top:982px;width:1665px;height:73px;background:#727272;"></div>
<div class="a" style="left:0px;top:1055px;width:1665px;height:25px;background:#686868;"></div>
<div class="a" style="left:0px;top:1050px;width:1665px;height:1px;background:#7e7e7e;"></div>
<div class="a" style="left:0px;top:1053px;width:1665px;height:1px;background:#686868;"></div>
<div class="a" style="left:0px;top:1054px;width:1665px;height:1px;background:#7e7e7e;"></div>
<div class="a" style="left:1665px;top:27px;width:1px;height:1053px;background:#0c0c0c;"></div>
<div class="a" style="left:1666px;top:27px;width:254px;height:25px;background:#686868;"></div>
<div class="a" style="left:1666px;top:52px;width:254px;height:159px;background:#727272;"></div>
<div class="a" style="left:1666px;top:211px;width:254px;height:1px;background:#0c0c0c;"></div>
<div class="a" style="left:1666px;top:27px;width:1px;height:1053px;background:#858585;"></div>
<div class="a" style="left:1667px;top:212px;width:253px;height:26px;background:#686868;"></div>
<div class="a" style="left:1667px;top:238px;width:253px;height:842px;background:#727272;"></div>
<div class="a" style="left:1667px;top:212px;width:253px;height:1px;background:#7c7c7c;"></div>
<div class="a" style="left:1667px;top:27px;width:253px;height:1px;background:#7c7c7c;"></div>
<div class="a" style="left:1918px;top:27px;width:2px;height:1053px;background:#828282;"></div>
<div class="a" style="left:1667px;top:238px;width:251px;height:1px;background:#7c7c7c;"></div>
<div class="w menu" style="left:8px;top:4px;width:30px;height:20px;"></div>
<svg style="left:11px;top:6px;" width="16" height="16" viewBox="0 0 16 16"><circle cx="8" cy="8" r="7" fill="#2d57a5" stroke="#16305f" stroke-width="1"/><circle cx="8" cy="8" r="5.8" fill="none" stroke="#a9c3ee" stroke-width=".9" opacity=".8"/><path d="M7 3.6h2.2v2H7zM6.2 6.8h3v4.4h1.1v1.3H6v-1.3h1.1V8.1H6.2z" fill="#fff"/></svg>
<svg style="left:27px;top:6px;" width="9" height="16" viewBox="0 0 9 16"><path d="M4.5 1.3L7.2 6.8H1.8zM4.5 14.7L7.2 9.2H1.8z" fill="#c4c4c4"/></svg>
<div class="t " style="left:50px;top:9px;"><i class="ke">File</i></div>
<div class="t " style="left:88px;top:9px;"><i class="kf">Render</i></div>
<div class="t " style="left:144px;top:9px;"><i class="kg">Window</i></div>
<div class="t " style="left:203px;top:9px;"><i class="kh">Help</i></div>
<div class="w menu rl" style="left:239px;top:4px;width:32px;height:20px;"></div>
<svg style="left:244px;top:6px;" width="16" height="16" viewBox="0 0 16 16"><rect x="1.5" y="1.5" width="13" height="13" rx="1" fill="#3a3a3a" stroke="#222"/><rect x="2.5" y="2.5" width="4.5" height="5" fill="#f2f2f2"/><rect x="2.5" y="9" width="4.5" height="4.5" fill="#f2f2f2"/><rect x="8.5" y="2.5" width="5" height="11" fill="#f2f2f2"/><rect x="3" y="11.5" width="3.5" height="1" fill="#888"/><rect x="9" y="11.5" width="4" height="1" fill="#888"/></svg>
<svg style="left:259px;top:6px;" width="9" height="16" viewBox="0 0 9 16"><path d="M4.5 1.3L7.2 6.8H1.8zM4.5 14.7L7.2 9.2H1.8z" fill="#c4c4c4"/></svg>
<div class="w txt rn" style="left:270px;top:4px;width:121px;height:20px;"></div>
<div class="t " style="left:278px;top:9px;"><i class="kg">Default</i></div>
<div class="w icb rn" style="left:390px;top:4px;width:21px;height:20px;"></div>
<svg style="left:394px;top:6px;" width="16" height="16" viewBox="0 0 16 16"><path d="M8 2.2v11.6M2.2 8h11.6" stroke="#1a1a1a" stroke-width="4"/><path d="M8 3.1v9.8M3.1 8h9.8" stroke="#ededed" stroke-width="2.2"/></svg>
<div class="w icb rr" style="left:410px;top:4px;width:21px;height:20px;"></div>
<svg style="left:413px;top:6px;" width="16" height="16" viewBox="0 0 16 16"><path d="M3 3l10 10M13 3L3 13" stroke="#1a1a1a" stroke-width="4"/><path d="M3.7 3.7l8.6 8.6M12.3 3.7l-8.6 8.6" stroke="#ededed" stroke-width="2.1"/></svg>
<div class="w menu rl" style="left:436px;top:4px;width:32px;height:20px;"></div>
<svg style="left:441px;top:6px;" width="16" height="16" viewBox="0 0 16 16"><circle cx="3.2" cy="3.4" r="1.6" fill="#e8e86a" stroke="#8a8a20" stroke-width=".7"/><rect x="8" y="1.5" width="5.6" height="9.5" rx="2.4" fill="#3f77cf" stroke="#1b3a73" stroke-width=".9"/><rect x="9.2" y="3" width="1.6" height="6.5" fill="#9cc0f2" opacity=".8"/><circle cx="5.6" cy="10.6" r="3.6" fill="#d9d9d9" stroke="#222" stroke-width="1"/><circle cx="4.6" cy="9.6" r="1.6" fill="#fff"/></svg>
<svg style="left:456px;top:6px;" width="9" height="16" viewBox="0 0 9 16"><path d="M4.5 1.3L7.2 6.8H1.8zM4.5 14.7L7.2 9.2H1.8z" fill="#c4c4c4"/></svg>
<div class="w txt rn" style="left:467px;top:4px;width:121px;height:20px;"></div>
<div class="t " style="left:475px;top:9px;"><i class="ki">Scene</i></div>
<div class="w icb rn" style="left:587px;top:4px;width:21px;height:20px;"></div>
<svg style="left:591px;top:6px;" width="16" height="16" viewBox="0 0 16 16"><path d="M8 2.2v11.6M2.2 8h11.6" stroke="#1a1a1a" stroke-width="4"/><path d="M8 3.1v9.8M3.1 8h9.8" stroke="#ededed" stroke-width="2.2"/></svg>
<div class="w icb rr" style="left:607px;top:4px;width:21px;height:20px;"></div>
<svg style="left:610px;top:6px;" width="16" height="16" viewBox="0 0 16 16"><path d="M3 3l10 10M13 3L3 13" stroke="#1a1a1a" stroke-width="4"/><path d="M3.7 3.7l8.6 8.6M12.3 3.7l-8.6 8.6" stroke="#ededed" stroke-width="2.1"/></svg>
<div class="w menu" style="left:644px;top:4px;width:111px;height:20px;"></div>
<div class="t tw" style="left:652px;top:9px;"><i class="kj">Blender </i><i class="kf">Render</i></div>
<svg style="left:744px;top:6px;" width="9" height="16" viewBox="0 0 9 16"><path d="M4.5 1.3L7.2 6.8H1.8zM4.5 14.7L7.2 9.2H1.8z" fill="#c4c4c4"/></svg>
<svg style="left:773px;top:6px;" width="16" height="16" viewBox="0 0 16 16"><path d="M1.2 9.2L8.6 3.4H4.6V2h6.2l4 3.2c1.6 1.4 1.6 4.4 0 5.9c-1.8 1.7-5 1.7-6.8 0c-.9-.8-1.2-1.7-1.1-2.7L3 11.3z" fill="#f5792a" stroke="#7a3a10" stroke-width=".7"/><ellipse cx="10.6" cy="8.1" rx="3.1" ry="2.8" fill="#fff"/><ellipse cx="10.6" cy="8.1" rx="1.7" ry="1.55" fill="#265787"/></svg>
<div class="t " style="left:799px;top:9px;"><i class="kk">v2.72 </i><i class="kg">| </i><i class="kl">Verts:482 </i><i class="kg">| </i><i class="km">Faces:512 </i><i class="kg">| </i><i class="kn">Tris:960 </i><i class="kg">| </i><i class="ko">Objects:1/1 </i><i class="kg">| </i><i class="kh">Lamps:0/0 </i><i class="kg">| </i><i class="kp">Mem:9.63M </i><i class="kg">| </i><i class="kd">Sphere</i></div>
<svg style="left:0px;top:13px;" width="14" height="14" viewBox="0 0 14 14"><g fill="none" stroke-width="1"><path d="M0 10L4 14" stroke="#9a9a9a"/><path d="M0 11L3 14" stroke="#3c3c3c"/><path d="M0 6L8 14" stroke="#9a9a9a"/><path d="M0 7L7 14" stroke="#3c3c3c"/><path d="M0 2L12 14" stroke="#9a9a9a"/><path d="M0 3L11 14" stroke="#3c3c3c"/></g></svg>
<svg style="left:1905px;top:1px;" width="14" height="14" viewBox="0 0 14 14"><g fill="none" stroke-width="1"><path d="M10 0L14 4" stroke="#3c3c3c"/><path d="M11 0L14 3" stroke="#9a9a9a"/><path d="M6 0L14 8" stroke="#3c3c3c"/><path d="M7 0L14 7" stroke="#9a9a9a"/><path d="M2 0L14 12" stroke="#3c3c3c"/><path d="M3 0L14 11" stroke="#9a9a9a"/></g></svg>
<div class="a" style="left:2px;top:33px;width:18px;height:36px;background:#727272;border-radius:4px 0 0 4px;box-shadow:-1px 0 0 #7f7f7f,0 -1px 0 #7f7f7f"></div>
<div class="t" style="left:15px;top:63.5px;transform-origin:0 0;transform:rotate(-90deg) translateY(-10px);text-shadow:none"><i class="kq">Tools</i></div>
<div class="a" style="left:2px;top:74px;width:17px;height:44px;background:#646464;border-radius:4px 0 0 4px;box-shadow:0 0 0 1px #555"></div>
<div class="t" style="left:15px;top:112.5px;transform-origin:0 0;transform:rotate(-90deg) translateY(-10px);text-shadow:none"><i class="kr">Create</i></div>
<div class="a" style="left:2px;top:124px;width:17px;height:56px;background:#646464;border-radius:4px 0 0 4px;box-shadow:0 0 0 1px #555"></div>
<div class="t" style="left:15px;top:175.0px;transform-origin:0 0;transform:rotate(-90deg) translateY(-10px);text-shadow:none"><i class="ks">Relations</i></div>
<div class="a" style="left:2px;top:185px;width:17px;height:62px;background:#646464;border-radius:4px 0 0 4px;box-shadow:0 0 0 1px #555"></div>
<div class="t" style="left:15px;top:241.5px;transform-origin:0 0;transform:rotate(-90deg) translateY(-10px);text-shadow:none"><i class="ks">Animation</i></div>
<div class="a" style="left:2px;top:253px;width:17px;height:47px;background:#646464;border-radius:4px 0 0 4px;box-shadow:0 0 0 1px #555"></div>
<div class="t" style="left:15px;top:295.0px;transform-origin:0 0;transform:rotate(-90deg) translateY(-10px);text-shadow:none"><i class="kt">Physics</i></div>
<div class="a" style="left:2px;top:305px;width:17px;height:79px;background:#646464;border-radius:4px 0 0 4px;box-shadow:0 0 0 1px #555"></div>
<div class="t" style="left:15px;top:378.5px;transform-origin:0 0;transform:rotate(-90deg) translateY(-10px);text-shadow:none"><i class="ku">Grease </i><i class="kp">Pencil</i></div>
<svg style="left:33px;top:34px;" width="9" height="9" viewBox="0 0 9 9"><path d="M.3 .8H8.7L4.5 8.6z" fill="#1a1a1a"/></svg>
<div class="t ph" style="left:45px;top:32px;"><i class="kr">Transform</i></div>
<svg style="left:138px;top:38px;shape-rendering:crispEdges" width="11" height="6" viewBox="0 0 11 6"><rect x="0" y="0" width="1" height="1" fill="#3a3a3a"/><rect x="0" y="1" width="1" height="1" fill="#c8c8c8"/><rect x="0" y="3" width="1" height="1" fill="#3a3a3a"/><rect x="0" y="4" width="1" height="1" fill="#c8c8c8"/><rect x="3" y="0" width="1" height="1" fill="#3a3a3a"/><rect x="3" y="1" width="1" height="1" fill="#c8c8c8"/><rect x="3" y="3" width="1" height="1" fill="#3a3a3a"/><rect x="3" y="4" width="1" height="1" fill="#c8c8c8"/><rect x="6" y="0" width="1" height="1" fill="#3a3a3a"/><rect x="6" y="1" width="1" height="1" fill="#c8c8c8"/><rect x="6" y="3" width="1" height="1" fill="#3a3a3a"/><rect x="6" y="4" width="1" height="1" fill="#c8c8c8"/><rect x="9" y="0" width="1" height="1" fill="#3a3a3a"/><rect x="9" y="1" width="1" height="1" fill="#c8c8c8"/><rect x="9" y="3" width="1" height="1" fill="#3a3a3a"/><rect x="9" y="4" width="1" height="1" fill="#c8c8c8"/></svg>
<div class="w tool rt" style="left:28px;top:59px;width:123px;height:20px;"></div>
<div class="t " style="left:36px;top:64px;"><i class="kb">Translate</i></div>
<div class="w tool rn" style="left:28px;top:78px;width:123px;height:21px;"></div>
<div class="t " style="left:36px;top:83px;"><i class="kv">Rotate</i></div>
<div class="w tool rb" style="left:28px;top:98px;width:123px;height:21px;"></div>
<div class="t " style="left:36px;top:103px;"><i class="kh">Scale</i></div>
<div class="w tool" style="left:28px;top:124px;width:123px;height:20px;"></div>
<div class="t " style="left:36px;top:129px;"><i class="kn">Mirror</i></div>
<div class="hl" style="left:25px;top:151px;width:129px"></div>
<svg style="left:33px;top:159px;" width="9" height="9" viewBox="0 0 9 9"><path d="M.3 .8H8.7L4.5 8.6z" fill="#1a1a1a"/></svg>
<div class="t ph" style="left:45px;top:157px;"><i class="ks">Edit</i></div>
<svg style="left:138px;top:163px;shape-rendering:crispEdges" width="11" height="6" viewBox="0 0 11 6"><rect x="0" y="0" width="1" height="1" fill="#3a3a3a"/><rect x="0" y="1" width="1" height="1" fill="#c8c8c8"/><rect x="0" y="3" width="1" height="1" fill="#3a3a3a"/><rect x="0" y="4" width="1" height="1" fill="#c8c8c8"/><rect x="3" y="0" width="1" height="1" fill="#3a3a3a"/><rect x="3" y="1" width="1" height="1" fill="#c8c8c8"/><rect x="3" y="3" width="1" height="1" fill="#3a3a3a"/><rect x="3" y="4" width="1" height="1" fill="#c8c8c8"/><rect x="6" y="0" width="1" height="1" fill="#3a3a3a"/><rect x="6" y="1" width="1" height="1" fill="#c8c8c8"/><rect x="6" y="3" width="1" height="1" fill="#3a3a3a"/><rect x="6" y="4" width="1" height="1" fill="#c8c8c8"/><rect x="9" y="0" width="1" height="1" fill="#3a3a3a"/><rect x="9" y="1" width="1" height="1" fill="#c8c8c8"/><rect x="9" y="3" width="1" height="1" fill="#3a3a3a"/><rect x="9" y="4" width="1" height="1" fill="#c8c8c8"/></svg>
<div class="w tool rt" style="left:28px;top:184px;width:123px;height:20px;"></div>
<div class="t " style="left:36px;top:189px;"><i class="kw">Duplicate</i></div>
<div class="w tool rn" style="left:28px;top:203px;width:123px;height:21px;"></div>
<div class="t " style="left:36px;top:208px;"><i class="kw">Duplicate </i><i class="kx">Linked</i></div>
<div class="w tool rb" style="left:28px;top:223px;width:123px;height:21px;"></div>
<div class="t " style="left:36px;top:228px;"><i class="kh">Delete</i></div>
<div class="w tool" style="left:28px;top:249px;width:123px;height:20px;"></div>
<div class="t " style="left:36px;top:254px;"><i class="ky">Join</i></div>
<div class="w menu" style="left:28px;top:274px;width:123px;height:20px;"></div>
<div class="t tw" style="left:36px;top:279px;"><i class="kj">Set </i><i class="kz">Origin</i></div>
<svg style="left:140px;top:276px;" width="9" height="16" viewBox="0 0 9 16"><path d="M4.5 1.3L7.2 6.8H1.8zM4.5 14.7L7.2 9.2H1.8z" fill="#c4c4c4"/></svg>
<div class="t " style="left:36px;top:304px;"><i class="kaa">Shading:</i></div>
<div class="w tool rl" style="left:28px;top:319px;width:61px;height:20px;"></div>
<div class="t " style="left:36px;top:324px;"><i class="kab">Smooth</i></div>
<div class="w tool rr" style="left:88px;top:319px;width:63px;height:20px;"></div>
<div class="t " style="left:96px;top:324px;"><i class="kac">Flat</i></div>
<div class="hl" style="left:25px;top:346px;width:129px"></div>
<svg style="left:33px;top:354px;" width="9" height="9" viewBox="0 0 9 9"><path d="M.8 .3V8.7L8.4 4.5z" fill="#1a1a1a"/></svg>
<div class="t ph" style="left:45px;top:352px;"><i class="km">History</i></div>
<svg style="left:138px;top:358px;shape-rendering:crispEdges" width="11" height="6" viewBox="0 0 11 6"><rect x="0" y="0" width="1" height="1" fill="#3a3a3a"/><rect x="0" y="1" width="1" height="1" fill="#c8c8c8"/><rect x="0" y="3" width="1" height="1" fill="#3a3a3a"/><rect x="0" y="4" width="1" height="1" fill="#c8c8c8"/><rect x="3" y="0" width="1" height="1" fill="#3a3a3a"/><rect x="3" y="1" width="1" height="1" fill="#c8c8c8"/><rect x="3" y="3" width="1" height="1" fill="#3a3a3a"/><rect x="3" y="4" width="1" height="1" fill="#c8c8c8"/><rect x="6" y="0" width="1" height="1" fill="#3a3a3a"/><rect x="6" y="1" width="1" height="1" fill="#c8c8c8"/><rect x="6" y="3" width="1" height="1" fill="#3a3a3a"/><rect x="6" y="4" width="1" height="1" fill="#c8c8c8"/><rect x="9" y="0" width="1" height="1" fill="#3a3a3a"/><rect x="9" y="1" width="1" height="1" fill="#c8c8c8"/><rect x="9" y="3" width="1" height="1" fill="#3a3a3a"/><rect x="9" y="4" width="1" height="1" fill="#c8c8c8"/></svg>
<svg style="left:12px;top:747px;" width="9" height="9" viewBox="0 0 9 9"><path d="M.3 .8H8.7L4.5 8.6z" fill="#1a1a1a"/></svg>
<div class="t ph" style="left:24px;top:745px;"><i class="ks">Add </i><i class="kg">UV </i><i class="kad">Sphere</i></div>
<svg style="left:120px;top:751px;shape-rendering:crispEdges" width="11" height="6" viewBox="0 0 11 6"><rect x="0" y="0" width="1" height="1" fill="#3a3a3a"/><rect x="0" y="1" width="1" height="1" fill="#c8c8c8"/><rect x="0" y="3" width="1" height="1" fill="#3a3a3a"/><rect x="0" y="4" width="1" height="1" fill="#c8c8c8"/><rect x="3" y="0" width="1" height="1" fill="#3a3a3a"/><rect x="3" y="1" width="1" height="1" fill="#c8c8c8"/><rect x="3" y="3" width="1" height="1" fill="#3a3a3a"/><rect x="3" y="4" width="1" height="1" fill="#c8c8c8"/><rect x="6" y="0" width="1" height="1" fill="#3a3a3a"/><rect x="6" y="1" width="1" height="1" fill="#c8c8c8"/><rect x="6" y="3" width="1" height="1" fill="#3a3a3a"/><rect x="6" y="4" width="1" height="1" fill="#c8c8c8"/><rect x="9" y="0" width="1" height="1" fill="#3a3a3a"/><rect x="9" y="1" width="1" height="1" fill="#c8c8c8"/><rect x="9" y="3" width="1" height="1" fill="#3a3a3a"/><rect x="9" y="4" width="1" height="1" fill="#c8c8c8"/></svg>
<div class="a" style="left:142px;top:743px;width:13px;height:208px;border-radius:6.5px;background:linear-gradient(90deg,#575757,#5e5e5e)"></div>
<div class="a" style="left:142px;top:744px;width:13px;height:124px;border-radius:6.5px;border:1px solid #3c3c3c;background:linear-gradient(90deg,#9c9c9c,#7a7a7a)"></div>
<div class="t " style="left:14px;top:776px;"><i class="kf">Segments</i></div>
<div class="w num" style="left:7px;top:791px;width:126px;height:20px;"></div>
<svg style="left:14px;top:797.0px;" width="5" height="8" viewBox="0 0 5 8"><path d="M4.5 .5V7.5L.5 4z" fill="#6a6a6a"/></svg>
<svg style="left:121px;top:797.0px;" width="5" height="8" viewBox="0 0 5 8"><path d="M.5 .5V7.5L4.5 4z" fill="#6a6a6a"/></svg>
<div class="t " style="right:1803px;top:796px;"><i class="kae">32</i></div>
<div class="t " style="left:14px;top:821px;"><i class="kaf">Rings</i></div>
<div class="w num" style="left:7px;top:836px;width:126px;height:20px;"></div>
<svg style="left:14px;top:842.0px;" width="5" height="8" viewBox="0 0 5 8"><path d="M4.5 .5V7.5L.5 4z" fill="#6a6a6a"/></svg>
<svg style="left:121px;top:842.0px;" width="5" height="8" viewBox="0 0 5 8"><path d="M.5 .5V7.5L4.5 4z" fill="#6a6a6a"/></svg>
<div class="t " style="right:1803px;top:841px;"><i class="kae">16</i></div>
<div class="t " style="left:14px;top:865px;"><i class="ku">Size</i></div>
<div class="w num" style="left:7px;top:880px;width:126px;height:20px;"></div>
<svg style="left:14px;top:886.0px;" width="5" height="8" viewBox="0 0 5 8"><path d="M4.5 .5V7.5L.5 4z" fill="#6a6a6a"/></svg>
<svg style="left:121px;top:886.0px;" width="5" height="8" viewBox="0 0 5 8"><path d="M.5 .5V7.5L4.5 4z" fill="#6a6a6a"/></svg>
<div class="t " style="right:1803px;top:885px;"><i class="kag">1.000</i></div>
<div class="w opt" style="left:10px;top:908px;width:14px;height:14px;"></div>
<div class="t " style="left:31px;top:910px;"><i class="ka">Align </i><i class="ka">to </i><i class="kah">View</i></div>
<div class="t " style="left:14px;top:934px;"><i class="ko">Location</i></div>
<div class="a" style="left:7px;top:949px;width:126px;height:6px;overflow:hidden"><div class="w num" style="left:0;top:0;width:126px;height:20px"></div></div>
<div class="w menu" style="left:9px;top:958px;width:30px;height:20px;"></div>
<svg style="left:12px;top:960px;" width="16" height="16" viewBox="0 0 16 16"><path d="M8 1.5L14 3.6V10.6L8 14.6L2 10.6V3.6z" fill="#f4f4f4" stroke="#1e1e1e" stroke-width="1" stroke-linejoin="round"/><path d="M8 6.2L14 3.8V10.6L8 14.4z" fill="#8f8f8f"/><path d="M8 6.2L2 3.8V10.6L8 14.4z" fill="#dcdcdc"/><path d="M2 3.7L8 1.6L14 3.7L8 6.2z" fill="#fff"/></svg>
<svg style="left:28px;top:960px;" width="9" height="16" viewBox="0 0 9 16"><path d="M4.5 1.3L7.2 6.8H1.8zM4.5 14.7L7.2 9.2H1.8z" fill="#c4c4c4"/></svg>
<div class="t " style="left:52px;top:963px;"><i class="kah">View</i></div>
<div class="t " style="left:96px;top:963px;"><i class="kw">Select</i></div>
<div class="t " style="left:147px;top:963px;"><i class="kd">Add</i></div>
<div class="t " style="left:186px;top:963px;"><i class="kn">Object</i></div>
<div class="w menu" style="left:232px;top:958px;width:113px;height:20px;"></div>
<svg style="left:237px;top:960px;" width="16" height="16" viewBox="0 0 16 16"><path d="M8 1.5L14 3.6V10.8L8 14.6L2 10.8V3.6z" fill="#e9a55a" stroke="#5a3510" stroke-width="1" stroke-linejoin="round"/><path d="M8 6.4L14 3.8V10.8L8 14.4z" fill="#c67a2c"/><path d="M8 6.4L2 3.8V10.8L8 14.4z" fill="#f2bd7e"/><path d="M2.3 3.7L8 1.8L13.7 3.7L8 6.2z" fill="#fde0b6"/></svg>
<div class="t tw" style="left:256px;top:963px;"><i class="kn">Object </i><i class="kab">Mode</i></div>
<svg style="left:334px;top:960px;" width="9" height="16" viewBox="0 0 9 16"><path d="M4.5 1.3L7.2 6.8H1.8zM4.5 14.7L7.2 9.2H1.8z" fill="#c4c4c4"/></svg>
<div class="w menu" style="left:350px;top:958px;width:35px;height:20px;"></div>
<svg style="left:355px;top:960px;" width="16" height="16" viewBox="0 0 16 16"><defs><radialGradient id="sg" cx=".38" cy=".35" r=".75"><stop offset="0" stop-color="#fff"/><stop offset=".6" stop-color="#ececec"/><stop offset="1" stop-color="#a0a0a0"/></radialGradient></defs><circle cx="8" cy="8" r="6.6" fill="url(#sg)" stroke="#1a1a1a" stroke-width="1"/></svg>
<svg style="left:374px;top:960px;" width="9" height="16" viewBox="0 0 9 16"><path d="M4.5 1.3L7.2 6.8H1.8zM4.5 14.7L7.2 9.2H1.8z" fill="#c4c4c4"/></svg>
<div class="w menu rl" style="left:390px;top:958px;width:35px;height:20px;"></div>
<svg style="left:394px;top:960px;" width="16" height="16" viewBox="0 0 16 16"><circle cx="5.4" cy="5" r="4.1" fill="#e8e8e8" stroke="#1a1a1a" stroke-width="1"/><circle cx="10.6" cy="10.8" r="4.1" fill="#f0f0f0" stroke="#1a1a1a" stroke-width="1"/><rect x="6.4" y="6.4" width="3.2" height="3.2" fill="#fff" stroke="#1d5fd0" stroke-width="1.1"/></svg>
<svg style="left:414px;top:960px;" width="9" height="16" viewBox="0 0 9 16"><path d="M4.5 1.3L7.2 6.8H1.8zM4.5 14.7L7.2 9.2H1.8z" fill="#c4c4c4"/></svg>
<div class="w rr" style="left:424px;top:958px;width:21px;height:20px;background:linear-gradient(#9a9a9a,#7e7e7e)"></div>
<svg style="left:427px;top:960px;" width="16" height="16" viewBox="0 0 16 16"><g fill="#dfe8f8" stroke="#2a60c0" stroke-width=".9"><circle cx="3.5" cy="3.6" r="1.5"/><circle cx="8" cy="3.6" r="1.5"/><circle cx="12.5" cy="3.6" r="1.5"/></g><path d="M1 10.5L4.6 7.2V9.3H11.4V7.2L15 10.5L11.4 13.8V11.7H4.6V13.8z" fill="#f2f2f2" stroke="#222" stroke-width=".8" stroke-linejoin="round"/></svg>
<div class="w rl" style="left:450px;top:958px;width:20px;height:20px;background:linear-gradient(#8e8e8e,#7c7c7c)"></div>
<svg style="left:452px;top:960px;" width="16" height="16" viewBox="0 0 16 16"><path d="M8 9.5V2" stroke="#222" stroke-width="3" stroke-linecap="round"/><path d="M8 9.5L2.5 13.5" stroke="#222" stroke-width="3" stroke-linecap="round"/><path d="M8 9.5L13.5 13.5" stroke="#222" stroke-width="3" stroke-linecap="round"/><path d="M8 9.5V2" stroke="#3b7be8" stroke-width="1.6" stroke-linecap="round"/><path d="M8 9.5L2.5 13.5" stroke="#e03030" stroke-width="1.6" stroke-linecap="round"/><path d="M8 9.5L13.5 13.5" stroke="#4fc43a" stroke-width="1.6" stroke-linecap="round"/><circle cx="8" cy="2.2" r="1" fill="#fff"/><circle cx="2.6" cy="13.4" r="1" fill="#fff"/><circle cx="13.4" cy="13.4" r="1" fill="#fff"/></svg>
<div class="w radio sel rn" style="left:469px;top:958px;width:21px;height:20px;"></div>
<svg style="left:472px;top:960px;" width="16" height="16" viewBox="0 0 16 16"><path d="M2.2 13.8L9.5 6.5L7.4 4.4L14 2L11.6 8.6L9.5 6.5" fill="#7aa7ee" stroke="#1c3c78" stroke-width="1" stroke-linejoin="round"/><path d="M2.2 13.8L9.8 6.2" stroke="#1c3c78" stroke-width="3" stroke-linecap="round"/><path d="M2.4 13.6L9.8 6.2" stroke="#7aa7ee" stroke-width="1.4" stroke-linecap="round"/></svg>
<div class="w radio rn" style="left:489px;top:958px;width:21px;height:20px;"></div>
<svg style="left:492px;top:960px;" width="16" height="16" viewBox="0 0 16 16"><path d="M3 13.5C3 7.5 6.5 3.6 12.8 3" fill="none" stroke="#2f4878" stroke-width="3" stroke-linecap="round"/><path d="M3 13.5C3 7.5 6.5 3.6 12.8 3" fill="none" stroke="#6f93d2" stroke-width="1.5" stroke-linecap="round"/></svg>
<div class="w radio rn" style="left:509px;top:958px;width:21px;height:20px;"></div>
<svg style="left:512px;top:960px;" width="16" height="16" viewBox="0 0 16 16"><path d="M2.5 13.5L10 6" stroke="#2f4878" stroke-width="3" stroke-linecap="round"/><path d="M2.5 13.5L10 6" stroke="#6f93d2" stroke-width="1.5" stroke-linecap="round"/><rect x="8.5" y="2" width="5.5" height="5.5" fill="#6f8fc8" stroke="#2f4878" stroke-width="1"/></svg>
<div class="w menu rr" style="left:529px;top:958px;width:73px;height:20px;"></div>
<div class="t tw" style="left:537px;top:963px;"><i class="ka">Global</i></div>
<svg style="left:591px;top:960px;" width="9" height="16" viewBox="0 0 9 16"><path d="M4.5 1.3L7.2 6.8H1.8zM4.5 14.7L7.2 9.2H1.8z" fill="#c4c4c4"/></svg>
<svg style="left:607px;top:958px;" width="50" height="20" viewBox="0 0 50 20"><rect x=".5" y=".5" width="49" height="19" rx="4" fill="#8c8c8c" stroke="#3e3e3e"/><path d="M.5 10H49.5M10.5 .5V19.5M20.5 .5V19.5M30.5 .5V19.5M39.5 .5V19.5" stroke="#3e3e3e" fill="none"/><circle cx="5.5" cy="5.2" r="2.2" fill="#f0a040" stroke="#6a3c08" stroke-width=".8"/></svg>
<svg style="left:662px;top:958px;" width="50" height="20" viewBox="0 0 50 20"><rect x=".5" y=".5" width="49" height="19" rx="4" fill="#8c8c8c" stroke="#3e3e3e"/><path d="M.5 10H49.5M10.5 .5V19.5M20.5 .5V19.5M30.5 .5V19.5M39.5 .5V19.5" stroke="#3e3e3e" fill="none"/></svg>
<div class="w " style="left:717px;top:958px;width:20px;height:20px;background:linear-gradient(#6c6c6c,#5c5c5c)"></div>
<svg style="left:719px;top:960px;" width="16" height="16" viewBox="0 0 16 16"><defs><linearGradient id="lk" x1="0" y1="0" x2="1" y2="1"><stop offset="0" stop-color="#f4f4f4"/><stop offset="1" stop-color="#7c7c7c"/></linearGradient></defs><rect x="1.5" y="2.5" width="9" height="10" fill="url(#lk)" stroke="#222" stroke-width="1"/><rect x="3" y="10.5" width="5" height="1" fill="#fff"/><g fill="none" stroke="#222" stroke-width="2.6"><ellipse cx="12" cy="6.4" rx="1.7" ry="2.3"/><ellipse cx="12" cy="11.4" rx="1.7" ry="2.3"/></g><g fill="none" stroke="#f0f0f0" stroke-width="1.1"><ellipse cx="12" cy="6.4" rx="1.7" ry="2.3"/><ellipse cx="12" cy="11.4" rx="1.7" ry="2.3"/></g></svg>
<div class="w " style="left:742px;top:958px;width:20px;height:20px;background:#8a8a8a;border-color:#5c5c5c"></div>
<svg style="left:744px;top:960px;" width="16" height="16" viewBox="0 0 16 16"><circle cx="8" cy="8" r="5.6" fill="none" stroke="#6e6e6e" stroke-width="1.2"/><circle cx="8" cy="8" r="2.6" fill="#a2a2a2" stroke="#6e6e6e" stroke-width="1.1"/></svg>
<div class="w rl" style="left:767px;top:958px;width:21px;height:20px;background:#8c8c8c;border-color:#4a4a4a"></div>
<svg style="left:769px;top:960px;" width="16" height="16" viewBox="0 0 16 16"><path d="M2.8 8.2L6.6 4.4A3.7 3.7 0 0 1 11.8 9.6L8 13.4" fill="none" stroke="#505050" stroke-width="4.4"/><path d="M2.8 8.2L6.6 4.4A3.7 3.7 0 0 1 11.8 9.6L8 13.4" fill="none" stroke="#a6a6a6" stroke-width="2.6"/></svg>
<div class="w menu rr" style="left:787px;top:958px;width:35px;height:20px;"></div>
<svg style="left:792px;top:959px;" width="17" height="17" viewBox="0 0 17 17"><path d="M6.5 3V16M11.5 3V16M2.5 8H15.5M2.5 13H15.5" stroke="#1c1c1c" stroke-width="2.8"/><path d="M6.5 3V16M11.5 3V16M2.5 8H15.5M2.5 13H15.5" stroke="#f2f2f2" stroke-width="1.2"/><circle cx="4.8" cy="4.6" r="3.5" fill="#dfe9fb" stroke="#2458b8" stroke-width="1.1"/><circle cx="4.8" cy="4.6" r="1.3" fill="#2d63c8"/></svg>
<svg style="left:811px;top:960px;" width="9" height="16" viewBox="0 0 9 16"><path d="M4.5 1.3L7.2 6.8H1.8zM4.5 14.7L7.2 9.2H1.8z" fill="#c4c4c4"/></svg>
<div class="w tool rl" style="left:827px;top:958px;width:21px;height:20px;"></div>
<svg style="left:829px;top:960px;" width="16" height="16" viewBox="0 0 16 16"><defs><linearGradient id="cl" x1="0" y1="0" x2="1" y2="1"><stop offset="0" stop-color="#2a4a80"/><stop offset=".55" stop-color="#3a2a3a"/><stop offset="1" stop-color="#a03020"/></linearGradient></defs><rect x="3" y="2.6" width="3.8" height="3" rx=".8" fill="#f4f4f4" stroke="#111" stroke-width="1"/><rect x="1.7" y="4.4" width="13.6" height="10.1" rx="1" fill="#f2f2f2" stroke="#111" stroke-width="1.1"/><rect x="3" y="8.3" width="3.3" height="4.6" fill="#383838"/><rect x="12.9" y="8.3" width="1.6" height="4.6" fill="#222"/><circle cx="9.7" cy="10.2" r="3.7" fill="#fff" stroke="#8a8a8a" stroke-width=".5"/><circle cx="9.7" cy="10.2" r="2.6" fill="url(#cl)"/><circle cx="8.8" cy="9.3" r=".7" fill="#9ab8e8" opacity=".8"/><circle cx="4.5" cy="6.5" r=".9" fill="#f00"/></svg>
<svg style="left:838px;top:959px;" width="9" height="9" viewBox="0 0 9 9"><circle cx="4.5" cy="4.5" r="3.2" fill="#e6bc1a" opacity=".92"/><path d="M4.5 1.3L5.3 3.7L7.7 4.5L5.3 5.3L4.5 7.7L3.7 5.3L1.3 4.5L3.7 3.7z" fill="#fff"/></svg>
<div class="w tool rr" style="left:847px;top:958px;width:20px;height:20px;"></div>
<svg style="left:849px;top:960px;" width="16" height="16" viewBox="0 0 16 16"><rect x="2.5" y="7" width="12" height="7.5" fill="#3a3a3a" stroke="#151515" stroke-width="1"/><path d="M2.2 6.4L14 2.2L14.8 4.2L3 8.4z" fill="#f4f4f4" stroke="#151515" stroke-width=".9"/><path d="M5 5.4L6.4 7.2M8 4.3L9.4 6.1M11 3.2L12.4 5" stroke="#151515" stroke-width="1.5"/><rect x="3.5" y="8.2" width="10" height="1.2" fill="#f0f0f0"/><rect x="4" y="11.6" width="9" height="1" fill="#8a8a8a"/><path d="M1.6 5.2L3 4.6L4.2 8.2L2.6 8.8z" fill="#4f8be8"/></svg>
<svg style="left:0px;top:967px;" width="14" height="14" viewBox="0 0 14 14"><g fill="none" stroke-width="1"><path d="M0 10L4 14" stroke="#9a9a9a"/><path d="M0 11L3 14" stroke="#3c3c3c"/><path d="M0 6L8 14" stroke="#9a9a9a"/><path d="M0 7L7 14" stroke="#3c3c3c"/><path d="M0 2L12 14" stroke="#9a9a9a"/><path d="M0 3L11 14" stroke="#3c3c3c"/></g></svg>
<div class="a" style="left:0px;top:982px;width:286px;height:54px;background:#454545;"></div>
<div class="a" style="left:1504px;top:982px;width:161px;height:54px;background:#454545;"></div>
<svg style="left:0px;top:982px;" width="1665" height="54" viewBox="0 0 1665 54"><path d="M38.5 0V54M87.5 0V54M135.5 0V54M184.5 0V54M233.5 0V54M282.5 0V54M331.5 0V54M380.5 0V54M429.5 0V54M477.5 0V54M526.5 0V54M575.5 0V54M624.5 0V54M673.5 0V54M722.5 0V54M771.5 0V54M819.5 0V54M868.5 0V54M917.5 0V54M966.5 0V54M1015.5 0V54M1064.5 0V54M1112.5 0V54M1161.5 0V54M1210.5 0V54M1259.5 0V54M1308.5 0V54M1357.5 0V54M1406.5 0V54M1454.5 0V54M1503.5 0V54M1552.5 0V54M1601.5 0V54M1650.5 0V54" stroke="#000" stroke-opacity=".2" stroke-width="1" fill="none" shape-rendering="crispEdges"/><path d="M13.5 0V54M62.5 0V54M111.5 0V54M160.5 0V54M209.5 0V54M258.5 0V54M306.5 0V54M355.5 0V54M404.5 0V54M453.5 0V54M502.5 0V54M551.5 0V54M600.5 0V54M648.5 0V54M697.5 0V54M746.5 0V54M795.5 0V54M844.5 0V54M893.5 0V54M941.5 0V54M990.5 0V54M1039.5 0V54M1088.5 0V54M1137.5 0V54M1186.5 0V54M1235.5 0V54M1283.5 0V54M1332.5 0V54M1381.5 0V54M1430.5 0V54M1479.5 0V54M1528.5 0V54M1577.5 0V54M1625.5 0V54" stroke="#000" stroke-opacity=".07" stroke-width="1" fill="none" shape-rendering="crispEdges"/></svg>
<div class="a" style="left:0px;top:982px;width:1665px;height:1px;background:rgba(255,255,255,.12);"></div>
<div class="a" style="left:286px;top:982px;width:3px;height:55px;background:#60c040;"></div>
<div class="a" style="left:282px;top:982px;width:1px;height:55px;background:#222;"></div>
<div class="a" style="left:4px;top:1037px;width:1656px;height:13px;border-radius:6.5px;border:1px solid #3e3e3e;background:linear-gradient(#8e8e8e,#787878)"></div>
<div class="a" style="left:7px;top:1040px;width:7px;height:7px;border-radius:4px;background:#686868"></div>
<div class="a" style="left:1650px;top:1040px;width:7px;height:7px;border-radius:4px;background:#686868"></div>
<div class="t " style="left:31px;top:1038px;text-shadow:none"><i class="kai">-50</i></div>
<div class="t " style="left:79px;top:1038px;text-shadow:none"><i class="kai">-40</i></div>
<div class="t " style="left:128px;top:1038px;text-shadow:none"><i class="kai">-30</i></div>
<div class="t " style="left:176px;top:1038px;text-shadow:none"><i class="kai">-20</i></div>
<div class="t " style="left:225px;top:1038px;text-shadow:none"><i class="kai">-10</i></div>
<div class="t " style="left:281px;top:1038px;text-shadow:none"><i class="kae">0</i></div>
<div class="t " style="left:326px;top:1038px;text-shadow:none"><i class="kae">10</i></div>
<div class="t " style="left:374px;top:1038px;text-shadow:none"><i class="kae">20</i></div>
<div class="t " style="left:423px;top:1038px;text-shadow:none"><i class="kae">30</i></div>
<div class="t " style="left:471px;top:1038px;text-shadow:none"><i class="kae">40</i></div>
<div class="t " style="left:520px;top:1038px;text-shadow:none"><i class="kae">50</i></div>
<div class="t " style="left:568px;top:1038px;text-shadow:none"><i class="kae">60</i></div>
<div class="t " style="left:617px;top:1038px;text-shadow:none"><i class="kae">70</i></div>
<div class="t " style="left:665px;top:1038px;text-shadow:none"><i class="kae">80</i></div>
<div class="t " style="left:714px;top:1038px;text-shadow:none"><i class="kae">90</i></div>
<div class="t " style="left:759px;top:1038px;text-shadow:none"><i class="kae">100</i></div>
<div class="t " style="left:807px;top:1038px;text-shadow:none"><i class="kae">110</i></div>
<div class="t " style="left:856px;top:1038px;text-shadow:none"><i class="kae">120</i></div>
<div class="t " style="left:905px;top:1038px;text-shadow:none"><i class="kae">130</i></div>
<div class="t " style="left:953px;top:1038px;text-shadow:none"><i class="kae">140</i></div>
<div class="t " style="left:1002px;top:1038px;text-shadow:none"><i class="kae">150</i></div>
<div class="t " style="left:1050px;top:1038px;text-shadow:none"><i class="kae">160</i></div>
<div class="t " style="left:1099px;top:1038px;text-shadow:none"><i class="kae">170</i></div>
<div class="t " style="left:1147px;top:1038px;text-shadow:none"><i class="kae">180</i></div>
<div class="t " style="left:1196px;top:1038px;text-shadow:none"><i class="kae">190</i></div>
<div class="t " style="left:1244px;top:1038px;text-shadow:none"><i class="kae">200</i></div>
<div class="t " style="left:1293px;top:1038px;text-shadow:none"><i class="kae">210</i></div>
<div class="t " style="left:1341px;top:1038px;text-shadow:none"><i class="kae">220</i></div>
<div class="t " style="left:1390px;top:1038px;text-shadow:none"><i class="kae">230</i></div>
<div class="t " style="left:1438px;top:1038px;text-shadow:none"><i class="kae">240</i></div>
<div class="t " style="left:1487px;top:1038px;text-shadow:none"><i class="kae">250</i></div>
<div class="t " style="left:1536px;top:1038px;text-shadow:none"><i class="kae">260</i></div>
<div class="t " style="left:1584px;top:1038px;text-shadow:none"><i class="kae">270</i></div>
<div class="t " style="left:1633px;top:1038px;text-shadow:none"><i class="kae">280</i></div>
<svg style="left:1650px;top:983px;" width="14" height="14" viewBox="0 0 14 14"><g fill="none" stroke-width="1"><path d="M10 0L14 4" stroke="#3c3c3c"/><path d="M11 0L14 3" stroke="#9a9a9a"/><path d="M6 0L14 8" stroke="#3c3c3c"/><path d="M7 0L14 7" stroke="#9a9a9a"/><path d="M2 0L14 12" stroke="#3c3c3c"/><path d="M3 0L14 11" stroke="#9a9a9a"/></g></svg>
<div class="w menu" style="left:9px;top:1057px;width:30px;height:20px;"></div>
<svg style="left:12px;top:1059px;" width="16" height="16" viewBox="0 0 16 16"><circle cx="8" cy="8" r="6.6" fill="#f2f2f2" stroke="#222" stroke-width="1.1"/><circle cx="8" cy="8" r="5" fill="none" stroke="#bbb" stroke-width=".8"/><path d="M8 8L10.6 4.4" stroke="#222" stroke-width="1.2"/><path d="M8 8L10.2 10.8" stroke="#d02020" stroke-width="1.4"/></svg>
<svg style="left:28px;top:1059px;" width="9" height="16" viewBox="0 0 9 16"><path d="M4.5 1.3L7.2 6.8H1.8zM4.5 14.7L7.2 9.2H1.8z" fill="#c4c4c4"/></svg>
<div class="t " style="left:52px;top:1062px;"><i class="kah">View</i></div>
<div class="t " style="left:96px;top:1062px;"><i class="kaj">Marker</i></div>
<div class="t " style="left:151px;top:1062px;"><i class="kak">Frame</i></div>
<div class="t " style="left:203px;top:1062px;"><i class="ka">Playback</i></div>
<div class="w tool rl" style="left:261px;top:1057px;width:20px;height:20px;"></div>
<svg style="left:263px;top:1059px;" width="16" height="16" viewBox="0 0 16 16"><circle cx="8" cy="8" r="6.6" fill="#f2f2f2" stroke="#222" stroke-width="1.1"/><path d="M8 8V1.8A6.2 6.2 0 0 1 14.2 8z" fill="#f0a030" stroke="#7a4a08" stroke-width=".6"/><path d="M8 8L4.8 4.8" stroke="#222" stroke-width="1.1"/><path d="M8 8L12 11" stroke="#d02020" stroke-width="1.1"/></svg>
<div class="w tool rr" style="left:280px;top:1057px;width:21px;height:20px;"></div>
<svg style="left:283px;top:1059px;" width="16" height="16" viewBox="0 0 16 16"><path d="M5 8V5.2C5 2.2 11 2.2 11 5.2V8" fill="none" stroke="#222" stroke-width="2.6"/><path d="M5 8V5.2C5 2.2 11 2.2 11 5.2V8" fill="none" stroke="#dcdcdc" stroke-width="1.1"/><rect x="3" y="7.5" width="10" height="7" rx="1" fill="#d6d6d6" stroke="#222" stroke-width="1"/><rect x="4.5" y="10.5" width="7" height="1.4" fill="#6a6a6a"/></svg>
<div class="w num rl" style="left:306px;top:1057px;width:117px;height:20px;"></div>
<svg style="left:313px;top:1063.0px;" width="5" height="8" viewBox="0 0 5 8"><path d="M4.5 .5V7.5L.5 4z" fill="#6a6a6a"/></svg>
<svg style="left:411px;top:1063.0px;" width="5" height="8" viewBox="0 0 5 8"><path d="M.5 .5V7.5L4.5 4z" fill="#6a6a6a"/></svg>
<div class="t " style="left:322px;top:1062px;"><i class="kg">Start:</i></div>
<div class="t " style="right:1513px;top:1062px;"><i class="kae">1</i></div>
<div class="w num rr" style="left:422px;top:1057px;width:112px;height:20px;"></div>
<svg style="left:429px;top:1063.0px;" width="5" height="8" viewBox="0 0 5 8"><path d="M4.5 .5V7.5L.5 4z" fill="#6a6a6a"/></svg>
<svg style="left:522px;top:1063.0px;" width="5" height="8" viewBox="0 0 5 8"><path d="M.5 .5V7.5L4.5 4z" fill="#6a6a6a"/></svg>
<div class="t " style="left:438px;top:1062px;"><i class="kal">End:</i></div>
<div class="t " style="right:1402px;top:1062px;"><i class="kae">250</i></div>
<div class="w num" style="left:539px;top:1057px;width:90px;height:20px;"></div>
<svg style="left:546px;top:1063.0px;" width="5" height="8" viewBox="0 0 5 8"><path d="M4.5 .5V7.5L.5 4z" fill="#6a6a6a"/></svg>
<svg style="left:617px;top:1063.0px;" width="5" height="8" viewBox="0 0 5 8"><path d="M.5 .5V7.5L4.5 4z" fill="#6a6a6a"/></svg>
<div class="t " style="right:1307px;top:1062px;"><i class="kae">1</i></div>
<div class="w tool rl" style="left:645px;top:1057px;width:20px;height:20px;"></div>
<svg style="left:648px;top:1059px;" width="16" height="16" viewBox="0 0 16 16"><g fill="#f2f2f2" stroke="#1e1e1e" stroke-width="1" stroke-linejoin="round"><rect x="2" y="3.5" width="2.2" height="9"/><path d="M9 3.5V12.5L4.6 8z"/><path d="M14 3.5V12.5L9.4 8z"/></g></svg>
<div class="w tool rn" style="left:664px;top:1057px;width:21px;height:20px;"></div>
<svg style="left:667px;top:1059px;" width="16" height="16" viewBox="0 0 16 16"><g fill="#f2f2f2" stroke="#1e1e1e" stroke-width="1" stroke-linejoin="round"><path d="M8 3.5V12.5L2 8z"/><path d="M14 3.5V12.5L8 8z"/></g></svg>
<div class="w tool rn" style="left:684px;top:1057px;width:21px;height:20px;"></div>
<svg style="left:687px;top:1059px;" width="16" height="16" viewBox="0 0 16 16"><g fill="#f2f2f2" stroke="#1e1e1e" stroke-width="1" stroke-linejoin="round"><path d="M12.5 2.5V13.5L3 8z"/></g></svg>
<div class="w tool rn" style="left:704px;top:1057px;width:21px;height:20px;"></div>
<svg style="left:707px;top:1059px;" width="16" height="16" viewBox="0 0 16 16"><g fill="#f2f2f2" stroke="#1e1e1e" stroke-width="1" stroke-linejoin="round"><path d="M3.5 2.5V13.5L13 8z"/></g></svg>
<div class="w tool rn" style="left:724px;top:1057px;width:21px;height:20px;"></div>
<svg style="left:727px;top:1059px;" width="16" height="16" viewBox="0 0 16 16"><g fill="#f2f2f2" stroke="#1e1e1e" stroke-width="1" stroke-linejoin="round"><path d="M2 3.5V12.5L8 8z"/><path d="M8 3.5V12.5L14 8z"/></g></svg>
<div class="w tool rr" style="left:744px;top:1057px;width:21px;height:20px;"></div>
<svg style="left:747px;top:1059px;" width="16" height="16" viewBox="0 0 16 16"><g fill="#f2f2f2" stroke="#1e1e1e" stroke-width="1" stroke-linejoin="round"><path d="M2 3.5V12.5L6.6 8z"/><path d="M7 3.5V12.5L11.4 8z"/><rect x="11.8" y="3.5" width="2.2" height="9"/></g></svg>
<div class="w menu" style="left:770px;top:1057px;width:115px;height:20px;"></div>
<div class="t tw" style="left:778px;top:1062px;"><i class="kw">No </i><i class="kr">Sync</i></div>
<svg style="left:874px;top:1059px;" width="9" height="16" viewBox="0 0 9 16"><path d="M4.5 1.3L7.2 6.8H1.8zM4.5 14.7L7.2 9.2H1.8z" fill="#c4c4c4"/></svg>
<div class="w tool" style="left:901px;top:1057px;width:20px;height:20px;"></div>
<svg style="left:903px;top:1059px;" width="16" height="16" viewBox="0 0 16 16"><circle cx="8" cy="8" r="4.6" fill="#e8381c" stroke="#7a1408" stroke-width="1.1"/><circle cx="6.8" cy="6.6" r="1.4" fill="#ff8a66" opacity=".8"/></svg>
<div class="w txt rl" style="left:926px;top:1057px;width:131px;height:20px;"></div>
<svg style="left:930px;top:1059px;" width="16" height="16" viewBox="0 0 16 16"><path d="M3.5 1.5V11" stroke="#222" stroke-width="3.2" stroke-linecap="round"/><path d="M3.5 2.5H6.5M3.5 5.5H6" stroke="#222" stroke-width="2.6"/><circle cx="4" cy="12.6" r="2" fill="none" stroke="#222" stroke-width="2.6"/><path d="M3.5 1.5V11" stroke="#f0e080" stroke-width="1.4" stroke-linecap="round"/><path d="M3.5 2.5H6.5M3.5 5.5H6" stroke="#f0e080" stroke-width="1.1"/><circle cx="4" cy="12.6" r="2" fill="none" stroke="#f0e080" stroke-width="1.1"/><path d="M13.8 5.6L8.6 11" stroke="#222" stroke-width="3.2" stroke-linecap="round"/><circle cx="7.6" cy="12.2" r="2.1" fill="none" stroke="#222" stroke-width="2.6"/><path d="M13.8 5.6L8.6 11" stroke="#e8e8e8" stroke-width="1.4" stroke-linecap="round"/><circle cx="7.6" cy="12.2" r="2.1" fill="none" stroke="#e8e8e8" stroke-width="1.1"/></svg>
<div class="w tool rn" style="left:1056px;top:1057px;width:21px;height:20px;"></div>
<svg style="left:1059px;top:1059px;" width="16" height="16" viewBox="0 0 16 16"><path d="M12.6 2.6L6.4 9.6" stroke="#222" stroke-width="3.4" stroke-linecap="round"/><circle cx="5" cy="11.4" r="2.6" fill="none" stroke="#222" stroke-width="2.8"/><path d="M12.6 2.6L6.4 9.6" stroke="#ececec" stroke-width="1.6" stroke-linecap="round"/><circle cx="5" cy="11.4" r="2.6" fill="none" stroke="#ececec" stroke-width="1.3"/><path d="M11 4.6L13 6.4" stroke="#222" stroke-width="2.6"/><path d="M11 4.6L13 6.4" stroke="#ececec" stroke-width="1.1"/></svg>
<div class="w tool rr" style="left:1076px;top:1057px;width:21px;height:20px;"></div>
<svg style="left:1079px;top:1059px;" width="16" height="16" viewBox="0 0 16 16"><path d="M12.6 2.6L6.4 9.6" stroke="#222" stroke-width="3.4" stroke-linecap="round"/><circle cx="5" cy="11.4" r="2.6" fill="none" stroke="#222" stroke-width="2.8"/><path d="M12.6 2.6L6.4 9.6" stroke="#ececec" stroke-width="1.6" stroke-linecap="round"/><circle cx="5" cy="11.4" r="2.6" fill="none" stroke="#ececec" stroke-width="1.3"/><path d="M11 4.6L13 6.4" stroke="#222" stroke-width="2.6"/><path d="M11 4.6L13 6.4" stroke="#ececec" stroke-width="1.1"/><path d="M2.5 2.5L13.5 13.5" stroke="#e02828" stroke-width="1.6"/><path d="M2 4L5 2" stroke="#e02828" stroke-width="1.4"/></svg>
<svg style="left:0px;top:1066px;" width="14" height="14" viewBox="0 0 14 14"><g fill="none" stroke-width="1"><path d="M0 10L4 14" stroke="#9a9a9a"/><path d="M0 11L3 14" stroke="#3c3c3c"/><path d="M0 6L8 14" stroke="#9a9a9a"/><path d="M0 7L7 14" stroke="#3c3c3c"/><path d="M0 2L12 14" stroke="#9a9a9a"/><path d="M0 3L11 14" stroke="#3c3c3c"/></g></svg>
<div class="w menu" style="left:1675px;top:30px;width:30px;height:20px;"></div>
<svg style="left:1679px;top:32px;" width="16" height="16" viewBox="0 0 16 16"><rect x="1.5" y="1.5" width="6" height="2.6" fill="#f0a030" stroke="#7a4a08" stroke-width=".7"/><path d="M3.5 4.5V12.5H7M3.5 7.5H7" fill="none" stroke="#9fb4d8" stroke-width="1"/><rect x="7.5" y="6.2" width="6" height="2.4" fill="#f2f2f2" stroke="#333" stroke-width=".6"/><rect x="7.5" y="11.2" width="6" height="2.4" fill="#f2f2f2" stroke="#333" stroke-width=".6"/></svg>
<svg style="left:1694px;top:32px;" width="9" height="16" viewBox="0 0 9 16"><path d="M4.5 1.3L7.2 6.8H1.8zM4.5 14.7L7.2 9.2H1.8z" fill="#c4c4c4"/></svg>
<div class="t " style="left:1718px;top:35px;"><i class="kah">View</i></div>
<div class="t " style="left:1762px;top:35px;"><i class="kam">Search</i></div>
<div class="w menu" style="left:1809px;top:30px;width:130px;height:20px"></div>
<div class="t tw" style="left:1817px;top:35px;"><i class="kan">All </i><i class="ki">Scenes</i></div>
<svg style="left:1906px;top:28px;" width="14" height="14" viewBox="0 0 14 14"><g fill="none" stroke-width="1"><path d="M10 0L14 4" stroke="#3c3c3c"/><path d="M11 0L14 3" stroke="#9a9a9a"/><path d="M6 0L14 8" stroke="#3c3c3c"/><path d="M7 0L14 7" stroke="#9a9a9a"/><path d="M2 0L14 12" stroke="#3c3c3c"/><path d="M3 0L14 11" stroke="#9a9a9a"/></g></svg>
<div class="a" style="left:1667px;top:53px;width:253px;height:20px;background:rgba(0,0,0,.055);"></div>
<div class="a" style="left:1667px;top:93px;width:253px;height:20px;background:rgba(0,0,0,.055);"></div>
<div class="a" style="left:1667px;top:133px;width:253px;height:20px;background:rgba(0,0,0,.055);"></div>
<div class="a" style="left:1667px;top:173px;width:253px;height:20px;background:rgba(0,0,0,.055);"></div>
<div class="a" style="left:1667px;top:53px;width:195px;height:20px;background:#8a9096;"></div>
<div class="a" style="left:1861px;top:53px;width:1px;height:139px;background:#5c5c5c;"></div>
<div class="a" style="left:1881px;top:53px;width:1px;height:139px;background:#5c5c5c;"></div>
<div class="a" style="left:1901px;top:53px;width:1px;height:139px;background:#5c5c5c;"></div>
<div class="a" style="left:1679px;top:63px;width:15px;height:1px;background:#3a3a3a;"></div>
<div class="a" style="left:1693px;top:70px;width:1px;height:54px;background:#3a3a3a;"></div>
<div class="a" style="left:1693px;top:123px;width:19px;height:1px;background:#3a3a3a;"></div>
<svg style="left:1670px;top:59px;" width="10" height="10" viewBox="0 0 10 10"><circle cx="5" cy="5" r="3.8" fill="#f4f4f4" stroke="#111" stroke-width="1"/><path d="M3 5H7" stroke="#111" stroke-width="1"/></svg>
<div class="a" style="left:1686px;top:55px;width:18px;height:18px;border-radius:9px;background:rgba(255,255,255,.35)"></div>
<svg style="left:1688px;top:56px;" width="16" height="16" viewBox="0 0 16 16"><circle cx="3.2" cy="3.4" r="1.6" fill="#e8e86a" stroke="#8a8a20" stroke-width=".7"/><rect x="8" y="1.5" width="5.6" height="9.5" rx="2.4" fill="#3f77cf" stroke="#1b3a73" stroke-width=".9"/><rect x="9.2" y="3" width="1.6" height="6.5" fill="#9cc0f2" opacity=".8"/><circle cx="5.6" cy="10.6" r="3.6" fill="#d9d9d9" stroke="#222" stroke-width="1"/><circle cx="4.6" cy="9.6" r="1.6" fill="#fff"/></svg>
<div class="t " style="left:1707px;top:59px;"><i class="ki">Scene</i></div>
<svg style="left:1694px;top:78px;" width="10" height="10" viewBox="0 0 10 10"><circle cx="5" cy="5" r="3.8" fill="#f4f4f4" stroke="#111" stroke-width="1"/><path d="M3 5H7M5 3V7" stroke="#111" stroke-width="1"/></svg>
<svg style="left:1708px;top:76px;" width="16" height="16" viewBox="0 0 16 16"><rect x="5.5" y="4.5" width="9" height="10" fill="#e8d9a8" stroke="#4a4030" stroke-width=".9" transform="rotate(8 10 9)"/><rect x="1.5" y="1.5" width="10" height="10" fill="#f4f4f4" stroke="#222" stroke-width="1"/><rect x="6.5" y="3" width="2.6" height="5" rx="1.2" fill="#3f77cf" stroke="#1b3a73" stroke-width=".6"/><circle cx="5" cy="7.8" r="1.8" fill="#cfcfcf" stroke="#333" stroke-width=".6"/><circle cx="3.6" cy="3.8" r=".9" fill="#e0d040"/></svg>
<div class="t " style="left:1727px;top:79px;"><i class="kam">RenderLayers</i></div>
<div class="a" style="left:1805px;top:79px;width:1px;height:11px;background:#3a3a3a;"></div>
<div class="a" style="left:1814px;top:75px;width:18px;height:18px;border-radius:9px;background:rgba(255,255,255,.3)"></div>
<svg style="left:1816px;top:76px;" width="16" height="16" viewBox="0 0 16 16"><rect x="5.5" y="4.5" width="9" height="10" fill="#e8d9a8" stroke="#4a4030" stroke-width=".9" transform="rotate(8 10 9)"/><rect x="1.5" y="1.5" width="10" height="10" fill="#f4f4f4" stroke="#222" stroke-width="1"/><rect x="6.5" y="3" width="2.6" height="5" rx="1.2" fill="#3f77cf" stroke="#1b3a73" stroke-width=".6"/><circle cx="5" cy="7.8" r="1.8" fill="#cfcfcf" stroke="#333" stroke-width=".6"/><circle cx="3.6" cy="3.8" r=".9" fill="#e0d040"/></svg>
<div class="a" style="left:1707px;top:95px;width:18px;height:18px;border-radius:9px;background:rgba(200,200,255,.3)"></div>
<svg style="left:1708px;top:96px;" width="16" height="16" viewBox="0 0 16 16"><circle cx="8" cy="8" r="6.4" fill="#3f78c8" stroke="#1c2c50" stroke-width="1.1"/><path d="M4 5.5C5.5 3.5 8 3 9.5 4.2C9 6 7.5 6.2 7 7.8C6 9 4.8 8.2 4 5.5zM9.5 8.5C11 7.6 12.8 8.4 12.6 10C12 11.8 10.4 12.6 9.6 11.6z" fill="#5fae4a"/><path d="M3.5 4.6A6 6 0 0 1 9 2.2" stroke="#cfe0f8" stroke-width="1" fill="none" opacity=".8"/></svg>
<div class="t " style="left:1727px;top:99px;"><i class="kr">World</i></div>
<svg style="left:1689px;top:118px;" width="10" height="10" viewBox="0 0 10 10"><circle cx="5" cy="5" r="3.8" fill="#f4f4f4" stroke="#111" stroke-width="1"/><path d="M3 5H7M5 3V7" stroke="#111" stroke-width="1"/></svg>
<svg style="left:1708px;top:116px;" width="16" height="16" viewBox="0 0 16 16"><circle cx="8" cy="8" r="8" fill="#e8a048" opacity=".55"/><path d="M2.6 3L13.4 3L8 13.4z" fill="none" stroke="#4a2808" stroke-width="2.6" stroke-linejoin="round"/><path d="M2.6 3L13.4 3L8 13.4z" fill="none" stroke="#f28a20" stroke-width="1.3" stroke-linejoin="round"/><g fill="#fff" stroke="#4a2808" stroke-width=".5"><rect x="1.6" y="2" width="2" height="2"/><rect x="12.4" y="2" width="2" height="2"/><rect x="7" y="12.2" width="2" height="2"/></g></svg>
<div class="t tw" style="left:1727px;top:119px;"><i class="kd">Sphere</i></div>
<div class="a" style="left:1771px;top:119px;width:1px;height:11px;background:#3a3a3a;"></div>
<svg style="left:1782px;top:116px;" width="16" height="16" viewBox="0 0 16 16"><path d="M2.6 3L13.4 3L8 13.4z" fill="none" stroke="#2a2a2a" stroke-width="2.4" stroke-linejoin="round"/><path d="M2.6 3L13.4 3L8 13.4z" fill="none" stroke="#8a8a8a" stroke-width="1" stroke-linejoin="round"/><g fill="#d8d8d8" stroke="#2a2a2a" stroke-width=".8"><circle cx="2.6" cy="3" r="1.7"/><circle cx="13.4" cy="3" r="1.7"/><circle cx="8" cy="13.4" r="1.7"/></g></svg>
<svg style="left:1863px;top:116px;" width="16" height="16" viewBox="0 0 16 16"><path d="M1 8C4 3.4 12 3.4 15 8C12 12.4 4 12.4 1 8z" fill="#f4f4f4" stroke="#222" stroke-width="1"/><circle cx="8" cy="7.8" r="2.7" fill="#5a5a5a" stroke="#222" stroke-width=".6"/><circle cx="8" cy="7.8" r="1.1" fill="#111"/></svg>
<svg style="left:1884px;top:116px;" width="16" height="16" viewBox="0 0 16 16"><path d="M4 1.5L4 13L6.8 10.4L9 15L10.8 14.2L8.6 9.6L12.2 9.4z" fill="#f6f6f6" stroke="#1a1a1a" stroke-width="1" stroke-linejoin="round"/></svg>
<svg style="left:1903px;top:116px;" width="16" height="16" viewBox="0 0 16 16"><defs><linearGradient id="cl" x1="0" y1="0" x2="1" y2="1"><stop offset="0" stop-color="#2a4a80"/><stop offset=".55" stop-color="#3a2a3a"/><stop offset="1" stop-color="#a03020"/></linearGradient></defs><rect x="3" y="2.6" width="3.8" height="3" rx=".8" fill="#f4f4f4" stroke="#111" stroke-width="1"/><rect x="1.7" y="4.4" width="13.6" height="10.1" rx="1" fill="#f2f2f2" stroke="#111" stroke-width="1.1"/><rect x="3" y="8.3" width="3.3" height="4.6" fill="#383838"/><rect x="12.9" y="8.3" width="1.6" height="4.6" fill="#222"/><circle cx="9.7" cy="10.2" r="3.7" fill="#fff" stroke="#8a8a8a" stroke-width=".5"/><circle cx="9.7" cy="10.2" r="2.6" fill="url(#cl)"/><circle cx="8.8" cy="9.3" r=".7" fill="#9ab8e8" opacity=".8"/><circle cx="4.5" cy="6.5" r=".9" fill="#f00"/></svg>
<div class="a" style="left:1670px;top:194px;width:246px;height:13px;border-radius:6.5px;background:#5a5a5a"></div>
<div class="a" style="left:1670px;top:194px;width:207px;height:13px;border-radius:6.5px;border:1px solid #4a4a4a;background:linear-gradient(#8c8c8c,#7a7a7a)"></div>
<svg style="left:1667px;top:197px;" width="14" height="14" viewBox="0 0 14 14"><g fill="none" stroke-width="1"><path d="M0 10L4 14" stroke="#9a9a9a"/><path d="M0 11L3 14" stroke="#3c3c3c"/><path d="M0 6L8 14" stroke="#9a9a9a"/><path d="M0 7L7 14" stroke="#3c3c3c"/><path d="M0 2L12 14" stroke="#9a9a9a"/><path d="M0 3L11 14" stroke="#3c3c3c"/></g></svg>
<div class="a" style="left:1649px;top:50px;width:16px;height:14px;border-radius:4px 0 0 4px;background:#2d2d2d"></div>
<svg style="left:1651px;top:52px;" width="10" height="10" viewBox="0 0 10 10"><path d="M5 2V8M2 5H8" stroke="#858585" stroke-width="1.8"/></svg>
<svg style="left:1650px;top:28px;" width="14" height="14" viewBox="0 0 14 14"><g fill="none" stroke-width="1"><path d="M10 0L14 4" stroke="#3c3c3c"/><path d="M11 0L14 3" stroke="#9a9a9a"/><path d="M6 0L14 8" stroke="#3c3c3c"/><path d="M7 0L14 7" stroke="#9a9a9a"/><path d="M2 0L14 12" stroke="#3c3c3c"/><path d="M3 0L14 11" stroke="#9a9a9a"/></g></svg>
<div class="w menu" style="left:1675px;top:215px;width:30px;height:20px;"></div>
<svg style="left:1679px;top:217px;" width="16" height="16" viewBox="0 0 16 16"><rect x="1.5" y="2.5" width="12" height="4" rx="2" fill="#f2f2f2" stroke="#222" stroke-width="1"/><rect x="8" y="3.5" width="4.5" height="2" rx="1" fill="#555"/><rect x="1.5" y="9.5" width="12" height="4" rx="2" fill="#f2f2f2" stroke="#222" stroke-width="1"/><rect x="2.5" y="10.5" width="1.6" height="2" fill="#555"/><rect x="11" y="10.5" width="1.6" height="2" fill="#555"/></svg>
<svg style="left:1694px;top:217px;" width="9" height="16" viewBox="0 0 9 16"><path d="M4.5 1.3L7.2 6.8H1.8zM4.5 14.7L7.2 9.2H1.8z" fill="#c4c4c4"/></svg>
<div class="w radio sel rl" style="left:1713px;top:215px;width:21px;height:20px;"></div>
<svg style="left:1716px;top:217px;" width="16" height="16" viewBox="0 0 16 16"><defs><linearGradient id="cl" x1="0" y1="0" x2="1" y2="1"><stop offset="0" stop-color="#2a4a80"/><stop offset=".55" stop-color="#3a2a3a"/><stop offset="1" stop-color="#a03020"/></linearGradient></defs><rect x="3" y="2.6" width="3.8" height="3" rx=".8" fill="#f4f4f4" stroke="#111" stroke-width="1"/><rect x="1.7" y="4.4" width="13.6" height="10.1" rx="1" fill="#f2f2f2" stroke="#111" stroke-width="1.1"/><rect x="3" y="8.3" width="3.3" height="4.6" fill="#383838"/><rect x="12.9" y="8.3" width="1.6" height="4.6" fill="#222"/><circle cx="9.7" cy="10.2" r="3.7" fill="#fff" stroke="#8a8a8a" stroke-width=".5"/><circle cx="9.7" cy="10.2" r="2.6" fill="url(#cl)"/><circle cx="8.8" cy="9.3" r=".7" fill="#9ab8e8" opacity=".8"/><circle cx="4.5" cy="6.5" r=".9" fill="#f00"/></svg>
<div class="w radio rn" style="left:1733px;top:215px;width:20px;height:20px;"></div>
<svg style="left:1736px;top:217px;opacity:.72;" width="16" height="16" viewBox="0 0 16 16"><rect x="5.5" y="4.5" width="9" height="10" fill="#e8d9a8" stroke="#4a4030" stroke-width=".9" transform="rotate(8 10 9)"/><rect x="1.5" y="1.5" width="10" height="10" fill="#f4f4f4" stroke="#222" stroke-width="1"/><rect x="6.5" y="3" width="2.6" height="5" rx="1.2" fill="#3f77cf" stroke="#1b3a73" stroke-width=".6"/><circle cx="5" cy="7.8" r="1.8" fill="#cfcfcf" stroke="#333" stroke-width=".6"/><circle cx="3.6" cy="3.8" r=".9" fill="#e0d040"/></svg>
<div class="w radio rn" style="left:1752px;top:215px;width:21px;height:20px;"></div>
<svg style="left:1755px;top:217px;opacity:.72;" width="16" height="16" viewBox="0 0 16 16"><circle cx="3.2" cy="3.4" r="1.6" fill="#e8e86a" stroke="#8a8a20" stroke-width=".7"/><rect x="8" y="1.5" width="5.6" height="9.5" rx="2.4" fill="#3f77cf" stroke="#1b3a73" stroke-width=".9"/><rect x="9.2" y="3" width="1.6" height="6.5" fill="#9cc0f2" opacity=".8"/><circle cx="5.6" cy="10.6" r="3.6" fill="#d9d9d9" stroke="#222" stroke-width="1"/><circle cx="4.6" cy="9.6" r="1.6" fill="#fff"/></svg>
<div class="w radio rn" style="left:1772px;top:215px;width:21px;height:20px;"></div>
<svg style="left:1775px;top:217px;opacity:.72;" width="16" height="16" viewBox="0 0 16 16"><circle cx="8" cy="8" r="6.4" fill="#3f78c8" stroke="#1c2c50" stroke-width="1.1"/><path d="M4 5.5C5.5 3.5 8 3 9.5 4.2C9 6 7.5 6.2 7 7.8C6 9 4.8 8.2 4 5.5zM9.5 8.5C11 7.6 12.8 8.4 12.6 10C12 11.8 10.4 12.6 9.6 11.6z" fill="#5fae4a"/><path d="M3.5 4.6A6 6 0 0 1 9 2.2" stroke="#cfe0f8" stroke-width="1" fill="none" opacity=".8"/></svg>
<div class="w radio rn" style="left:1792px;top:215px;width:21px;height:20px;"></div>
<svg style="left:1795px;top:217px;opacity:.72;" width="16" height="16" viewBox="0 0 16 16"><path d="M8 1.5L14 3.6V10.8L8 14.6L2 10.8V3.6z" fill="#e9a55a" stroke="#5a3510" stroke-width="1" stroke-linejoin="round"/><path d="M8 6.4L14 3.8V10.8L8 14.4z" fill="#c67a2c"/><path d="M8 6.4L2 3.8V10.8L8 14.4z" fill="#f2bd7e"/><path d="M2.3 3.7L8 1.8L13.7 3.7L8 6.2z" fill="#fde0b6"/></svg>
<div class="w radio rn" style="left:1812px;top:215px;width:21px;height:20px;"></div>
<svg style="left:1815px;top:217px;opacity:.72;" width="16" height="16" viewBox="0 0 16 16"><g fill="none" stroke="#3a3a3a" stroke-width="3.2"><ellipse cx="5.4" cy="10.2" rx="3.6" ry="2.4" transform="rotate(-40 5.4 10.2)"/><ellipse cx="10.6" cy="5.8" rx="3.6" ry="2.4" transform="rotate(-40 10.6 5.8)"/></g><g fill="none" stroke="#a8a8a8" stroke-width="1.5"><ellipse cx="5.4" cy="10.2" rx="3.6" ry="2.4" transform="rotate(-40 5.4 10.2)"/><ellipse cx="10.6" cy="5.8" rx="3.6" ry="2.4" transform="rotate(-40 10.6 5.8)"/></g></svg>
<div class="w radio rn" style="left:1832px;top:215px;width:21px;height:20px;"></div>
<svg style="left:1835px;top:217px;opacity:.72;" width="16" height="16" viewBox="0 0 16 16"><path d="M2.5 14L9 7.2C8 4.6 10 1.8 13 2.2L11 4.4L12 5.6L14.2 3.6C14.6 6.6 12 8.6 9.6 7.8L3.6 14.6z" fill="#5f95e0" stroke="#1f3a70" stroke-width="1" stroke-linejoin="round"/></svg>
<div class="w radio rn" style="left:1852px;top:215px;width:21px;height:20px;"></div>
<svg style="left:1855px;top:217px;opacity:.72;" width="16" height="16" viewBox="0 0 16 16"><path d="M2.6 3L13.4 3L8 13.4z" fill="none" stroke="#2a2a2a" stroke-width="2.4" stroke-linejoin="round"/><path d="M2.6 3L13.4 3L8 13.4z" fill="none" stroke="#8a8a8a" stroke-width="1" stroke-linejoin="round"/><g fill="#d8d8d8" stroke="#2a2a2a" stroke-width=".8"><circle cx="2.6" cy="3" r="1.7"/><circle cx="13.4" cy="3" r="1.7"/><circle cx="8" cy="13.4" r="1.7"/></g></svg>
<div class="w radio rn" style="left:1872px;top:215px;width:21px;height:20px;"></div>
<svg style="left:1875px;top:217px;opacity:.72;" width="16" height="16" viewBox="0 0 16 16"><defs><radialGradient id="mg" cx=".35" cy=".3" r=".8"><stop offset="0" stop-color="#e8e8e8"/><stop offset=".6" stop-color="#8a7a78"/><stop offset="1" stop-color="#3a3030"/></radialGradient></defs><circle cx="8" cy="8" r="6.4" fill="url(#mg)" stroke="#222" stroke-width="1"/><path d="M8 8L14 8A6 6 0 0 1 8 14z" fill="#b05040" opacity=".45"/></svg>
<div class="w radio rn" style="left:1892px;top:215px;width:21px;height:20px;"></div>
<svg style="left:1895px;top:217px;opacity:.72;" width="16" height="16" viewBox="0 0 16 16"><rect x="1.5" y="1.5" width="13" height="13" fill="#d8d8d8" stroke="#222" stroke-width="1"/><rect x="2" y="2" width="3" height="3" fill="#9a2a1c"/><rect x="2" y="8" width="3" height="3" fill="#9a2a1c"/><rect x="5" y="5" width="3" height="3" fill="#9a2a1c"/><rect x="5" y="11" width="3" height="3" fill="#9a2a1c"/><rect x="8" y="2" width="3" height="3" fill="#9a2a1c"/><rect x="8" y="8" width="3" height="3" fill="#9a2a1c"/><rect x="11" y="5" width="3" height="3" fill="#9a2a1c"/><rect x="11" y="11" width="3" height="3" fill="#9a2a1c"/></svg>
<div class="w radio rn" style="left:1912px;top:215px;width:21px;height:20px;"></div>
<svg style="left:1915px;top:217px;opacity:.72;" width="16" height="16" viewBox="0 0 16 16"><path d="M2 8L6 7L8 2L10 7L15 8L10 9.4L8 14L6 9.4z" fill="#fff6c0" stroke="#c8a020" stroke-width=".7"/></svg>
<svg style="left:1906px;top:213px;" width="14" height="14" viewBox="0 0 14 14"><g fill="none" stroke-width="1"><path d="M10 0L14 4" stroke="#3c3c3c"/><path d="M11 0L14 3" stroke="#9a9a9a"/><path d="M6 0L14 8" stroke="#3c3c3c"/><path d="M7 0L14 7" stroke="#9a9a9a"/><path d="M2 0L14 12" stroke="#3c3c3c"/><path d="M3 0L14 11" stroke="#9a9a9a"/></g></svg>
<svg style="left:1676px;top:248px;" width="16" height="16" viewBox="0 0 16 16"><path d="M1.5 14.5L6.5 9.5" stroke="#222" stroke-width="2.4" stroke-linecap="round"/><path d="M1.5 14.5L6.5 9.5" stroke="#ddd" stroke-width="1" stroke-linecap="round"/><path d="M9.5 1.5L14.5 6.5L13 7.4L11.4 6.8L8.8 9.4L9.4 12L8 13L3 8L4 6.6L6.6 7.2L9.2 4.6L8.6 3z" fill="#e8e8e8" stroke="#222" stroke-width="1" stroke-linejoin="round"/></svg>
<svg style="left:1698px;top:248px;" width="16" height="16" viewBox="0 0 16 16"><circle cx="3.2" cy="3.4" r="1.6" fill="#e8e86a" stroke="#8a8a20" stroke-width=".7"/><rect x="8" y="1.5" width="5.6" height="9.5" rx="2.4" fill="#3f77cf" stroke="#1b3a73" stroke-width=".9"/><rect x="9.2" y="3" width="1.6" height="6.5" fill="#9cc0f2" opacity=".8"/><circle cx="5.6" cy="10.6" r="3.6" fill="#d9d9d9" stroke="#222" stroke-width="1"/><circle cx="4.6" cy="9.6" r="1.6" fill="#fff"/></svg>
<div class="t " style="left:1718px;top:252px;"><i class="ki">Scene</i></div>
<div class="hl" style="left:1671px;top:273px;width:244px"></div>
<svg style="left:1679px;top:281px;" width="9" height="9" viewBox="0 0 9 9"><path d="M.3 .8H8.7L4.5 8.6z" fill="#1a1a1a"/></svg>
<div class="t ph" style="left:1691px;top:279px;"><i class="kz">Render</i></div>
<svg style="left:1899px;top:285px;shape-rendering:crispEdges" width="11" height="6" viewBox="0 0 11 6"><rect x="0" y="0" width="1" height="1" fill="#3a3a3a"/><rect x="0" y="1" width="1" height="1" fill="#c8c8c8"/><rect x="0" y="3" width="1" height="1" fill="#3a3a3a"/><rect x="0" y="4" width="1" height="1" fill="#c8c8c8"/><rect x="3" y="0" width="1" height="1" fill="#3a3a3a"/><rect x="3" y="1" width="1" height="1" fill="#c8c8c8"/><rect x="3" y="3" width="1" height="1" fill="#3a3a3a"/><rect x="3" y="4" width="1" height="1" fill="#c8c8c8"/><rect x="6" y="0" width="1" height="1" fill="#3a3a3a"/><rect x="6" y="1" width="1" height="1" fill="#c8c8c8"/><rect x="6" y="3" width="1" height="1" fill="#3a3a3a"/><rect x="6" y="4" width="1" height="1" fill="#c8c8c8"/><rect x="9" y="0" width="1" height="1" fill="#3a3a3a"/><rect x="9" y="1" width="1" height="1" fill="#c8c8c8"/><rect x="9" y="3" width="1" height="1" fill="#3a3a3a"/><rect x="9" y="4" width="1" height="1" fill="#c8c8c8"/></svg>
<div class="w tool rl" style="left:1674px;top:306px;width:79px;height:20px;"></div>
<svg style="left:1677px;top:308px;" width="16" height="16" viewBox="0 0 16 16"><defs><linearGradient id="cl" x1="0" y1="0" x2="1" y2="1"><stop offset="0" stop-color="#2a4a80"/><stop offset=".55" stop-color="#3a2a3a"/><stop offset="1" stop-color="#a03020"/></linearGradient></defs><rect x="3" y="2.6" width="3.8" height="3" rx=".8" fill="#f4f4f4" stroke="#111" stroke-width="1"/><rect x="1.7" y="4.4" width="13.6" height="10.1" rx="1" fill="#f2f2f2" stroke="#111" stroke-width="1.1"/><rect x="3" y="8.3" width="3.3" height="4.6" fill="#383838"/><rect x="12.9" y="8.3" width="1.6" height="4.6" fill="#222"/><circle cx="9.7" cy="10.2" r="3.7" fill="#fff" stroke="#8a8a8a" stroke-width=".5"/><circle cx="9.7" cy="10.2" r="2.6" fill="url(#cl)"/><circle cx="8.8" cy="9.3" r=".7" fill="#9ab8e8" opacity=".8"/><circle cx="4.5" cy="6.5" r=".9" fill="#f00"/></svg>
<svg style="left:1686px;top:307px;" width="9" height="9" viewBox="0 0 9 9"><circle cx="4.5" cy="4.5" r="3.2" fill="#e6bc1a" opacity=".92"/><path d="M4.5 1.3L5.3 3.7L7.7 4.5L5.3 5.3L4.5 7.7L3.7 5.3L1.3 4.5L3.7 3.7z" fill="#fff"/></svg>
<div class="t " style="left:1704px;top:311px;"><i class="kf">Render</i></div>
<div class="w tool rn" style="left:1752px;top:306px;width:80px;height:20px;"></div>
<svg style="left:1755px;top:308px;" width="16" height="16" viewBox="0 0 16 16"><rect x="2.5" y="7" width="12" height="7.5" fill="#3a3a3a" stroke="#151515" stroke-width="1"/><path d="M2.2 6.4L14 2.2L14.8 4.2L3 8.4z" fill="#f4f4f4" stroke="#151515" stroke-width=".9"/><path d="M5 5.4L6.4 7.2M8 4.3L9.4 6.1M11 3.2L12.4 5" stroke="#151515" stroke-width="1.5"/><rect x="3.5" y="8.2" width="10" height="1.2" fill="#f0f0f0"/><rect x="4" y="11.6" width="9" height="1" fill="#8a8a8a"/><path d="M1.6 5.2L3 4.6L4.2 8.2L2.6 8.8z" fill="#4f8be8"/></svg>
<div class="t " style="left:1774px;top:311px;"><i class="ks">Animation</i></div>
<div class="w tool rr" style="left:1831px;top:306px;width:81px;height:20px;"></div>
<svg style="left:1834px;top:308px;" width="16" height="16" viewBox="0 0 16 16"><path d="M1.5 6H4L7.5 2.5V13.5L4 10H1.5z" fill="#f2f2f2" stroke="#222" stroke-width="1" stroke-linejoin="round"/><path d="M9.5 5.2C10.8 6.8 10.8 9.2 9.5 10.8M11.6 3.4C14 6 14 10 11.6 12.6" fill="none" stroke="#88aee8" stroke-width="1.3" stroke-linecap="round"/></svg>
<div class="t " style="left:1865px;top:311px;"><i class="ku">Audio</i></div>
<div class="t " style="left:1681px;top:336px;"><i class="kt">Display:</i></div>
<div class="w menu rl" style="left:1757px;top:331px;width:135px;height:20px;"></div>
<div class="t tw" style="left:1765px;top:336px;"><i class="kao">Image </i><i class="kad">Editor</i></div>
<svg style="left:1881px;top:333px;" width="9" height="16" viewBox="0 0 9 16"><path d="M4.5 1.3L7.2 6.8H1.8zM4.5 14.7L7.2 9.2H1.8z" fill="#c4c4c4"/></svg>
<div class="w tool rr" style="left:1891px;top:331px;width:21px;height:20px;"></div>
<svg style="left:1893px;top:333px;" width="16" height="16" viewBox="0 0 16 16"><path d="M2.5 6.5V4.6C2.5 1.8 8 1.8 8 4.6V9" fill="none" stroke="#222" stroke-width="2.4"/><path d="M2.5 6.5V4.6C2.5 1.8 8 1.8 8 4.6V9" fill="none" stroke="#e0e0e0" stroke-width="1"/><rect x="5.5" y="8" width="9" height="6.5" rx="1" fill="#e2e2e2" stroke="#222" stroke-width="1"/><rect x="7" y="10.6" width="6" height="1.3" fill="#6a6a6a"/></svg>
<div class="hl" style="left:1671px;top:358px;width:244px"></div>
<svg style="left:1679px;top:366px;" width="9" height="9" viewBox="0 0 9 9"><path d="M.3 .8H8.7L4.5 8.6z" fill="#1a1a1a"/></svg>
<div class="t ph" style="left:1691px;top:364px;"><i class="kap">Dimensions</i></div>
<svg style="left:1899px;top:370px;shape-rendering:crispEdges" width="11" height="6" viewBox="0 0 11 6"><rect x="0" y="0" width="1" height="1" fill="#3a3a3a"/><rect x="0" y="1" width="1" height="1" fill="#c8c8c8"/><rect x="0" y="3" width="1" height="1" fill="#3a3a3a"/><rect x="0" y="4" width="1" height="1" fill="#c8c8c8"/><rect x="3" y="0" width="1" height="1" fill="#3a3a3a"/><rect x="3" y="1" width="1" height="1" fill="#c8c8c8"/><rect x="3" y="3" width="1" height="1" fill="#3a3a3a"/><rect x="3" y="4" width="1" height="1" fill="#c8c8c8"/><rect x="6" y="0" width="1" height="1" fill="#3a3a3a"/><rect x="6" y="1" width="1" height="1" fill="#c8c8c8"/><rect x="6" y="3" width="1" height="1" fill="#3a3a3a"/><rect x="6" y="4" width="1" height="1" fill="#c8c8c8"/><rect x="9" y="0" width="1" height="1" fill="#3a3a3a"/><rect x="9" y="1" width="1" height="1" fill="#c8c8c8"/><rect x="9" y="3" width="1" height="1" fill="#3a3a3a"/><rect x="9" y="4" width="1" height="1" fill="#c8c8c8"/></svg>
<div class="w menu rl" style="left:1674px;top:391px;width:198px;height:20px;"></div>
<div class="t tw" style="left:1681px;top:396px;"><i class="kab">Render </i><i class="kj">Presets</i></div>
<svg style="left:1861px;top:393px;" width="9" height="16" viewBox="0 0 9 16"><path d="M4.5 1.3L7.2 6.8H1.8zM4.5 14.7L7.2 9.2H1.8z" fill="#c4c4c4"/></svg>
<div class="w tool rn" style="left:1871px;top:391px;width:21px;height:20px;"></div>
<svg style="left:1874px;top:393px;" width="16" height="16" viewBox="0 0 16 16"><path d="M8 2.2v11.6M2.2 8h11.6" stroke="#1a1a1a" stroke-width="4"/><path d="M8 3.1v9.8M3.1 8h9.8" stroke="#ededed" stroke-width="2.2"/></svg>
<div class="w tool rr" style="left:1891px;top:391px;width:21px;height:20px;"></div>
<svg style="left:1894px;top:393px;" width="16" height="16" viewBox="0 0 16 16"><path d="M2.2 8h11.6" stroke="#1a1a1a" stroke-width="4"/><path d="M3.1 8h9.8" stroke="#ededed" stroke-width="2.2"/></svg>
<div class="t " style="left:1681px;top:421px;"><i class="kak">Resolution:</i></div>
<div class="t " style="left:1805px;top:421px;"><i class="kad">Frame </i><i class="kaa">Range:</i></div>
<div class="w num rt" style="left:1674px;top:436px;width:115px;height:20px;"></div>
<svg style="left:1681px;top:442.0px;" width="5" height="8" viewBox="0 0 5 8"><path d="M4.5 .5V7.5L.5 4z" fill="#6a6a6a"/></svg>
<svg style="left:1777px;top:442.0px;" width="5" height="8" viewBox="0 0 5 8"><path d="M.5 .5V7.5L4.5 4z" fill="#6a6a6a"/></svg>
<div class="t " style="left:1689px;top:441px;"><i class="kaq">X:</i></div>
<div class="t " style="right:148px;top:441px;"><i class="kag">1920 </i><i class="kar">px</i></div>
<div class="w num rn" style="left:1674px;top:455px;width:115px;height:21px;"></div>
<svg style="left:1681px;top:461.5px;" width="5" height="8" viewBox="0 0 5 8"><path d="M4.5 .5V7.5L.5 4z" fill="#6a6a6a"/></svg>
<svg style="left:1777px;top:461.5px;" width="5" height="8" viewBox="0 0 5 8"><path d="M.5 .5V7.5L4.5 4z" fill="#6a6a6a"/></svg>
<div class="t " style="left:1689px;top:460px;"><i class="kas">Y:</i></div>
<div class="t " style="right:148px;top:460px;"><i class="kag">1080 </i><i class="kar">px</i></div>
<div class="w num rb" style="left:1674px;top:475px;width:115px;height:20px;background:linear-gradient(#a0a0a0,#b4b4b4)"><div style="position:absolute;left:0;top:0;width:60px;height:100%;background:linear-gradient(#6e6e6e,#808080)"></div></div>
<div class="t " style="right:147px;top:480px;"><i class="kat">50%</i></div>
<div class="w num rt" style="left:1797px;top:436px;width:115px;height:20px;"></div>
<svg style="left:1804px;top:442.0px;" width="5" height="8" viewBox="0 0 5 8"><path d="M4.5 .5V7.5L.5 4z" fill="#6a6a6a"/></svg>
<svg style="left:1900px;top:442.0px;" width="5" height="8" viewBox="0 0 5 8"><path d="M.5 .5V7.5L4.5 4z" fill="#6a6a6a"/></svg>
<div class="t " style="left:1813px;top:441px;"><i class="ks">Start </i><i class="kr">Frame:</i></div>
<div class="t " style="right:24px;top:441px;"><i class="kae">1</i></div>
<div class="w num rn" style="left:1797px;top:455px;width:115px;height:21px;"></div>
<svg style="left:1804px;top:461.5px;" width="5" height="8" viewBox="0 0 5 8"><path d="M4.5 .5V7.5L.5 4z" fill="#6a6a6a"/></svg>
<svg style="left:1900px;top:461.5px;" width="5" height="8" viewBox="0 0 5 8"><path d="M.5 .5V7.5L4.5 4z" fill="#6a6a6a"/></svg>
<div class="t " style="left:1813px;top:460px;"><i class="kau">End </i><i class="kr">Frame:</i></div>
<div class="t " style="right:24px;top:460px;"><i class="kae">250</i></div>
<div class="w num rb" style="left:1797px;top:475px;width:115px;height:20px;"></div>
<svg style="left:1804px;top:481.0px;" width="5" height="8" viewBox="0 0 5 8"><path d="M4.5 .5V7.5L.5 4z" fill="#6a6a6a"/></svg>
<svg style="left:1900px;top:481.0px;" width="5" height="8" viewBox="0 0 5 8"><path d="M.5 .5V7.5L4.5 4z" fill="#6a6a6a"/></svg>
<div class="t " style="left:1813px;top:480px;"><i class="kad">Frame </i><i class="kar">Step:</i></div>
<div class="t " style="right:24px;top:480px;"><i class="kae">1</i></div>
<div class="t " style="left:1681px;top:501px;"><i class="kx">Aspect </i><i class="kt">Ratio:</i></div>
<div class="t " style="left:1805px;top:501px;"><i class="kad">Frame </i><i class="kr">Rate:</i></div>
<div class="w num rt" style="left:1674px;top:516px;width:115px;height:20px;"></div>
<svg style="left:1681px;top:522.0px;" width="5" height="8" viewBox="0 0 5 8"><path d="M4.5 .5V7.5L.5 4z" fill="#6a6a6a"/></svg>
<svg style="left:1777px;top:522.0px;" width="5" height="8" viewBox="0 0 5 8"><path d="M.5 .5V7.5L4.5 4z" fill="#6a6a6a"/></svg>
<div class="t " style="left:1689px;top:521px;"><i class="kaq">X:</i></div>
<div class="t " style="right:148px;top:521px;"><i class="kag">1.000</i></div>
<div class="w num rb" style="left:1674px;top:535px;width:115px;height:21px;"></div>
<svg style="left:1681px;top:541.5px;" width="5" height="8" viewBox="0 0 5 8"><path d="M4.5 .5V7.5L.5 4z" fill="#6a6a6a"/></svg>
<svg style="left:1777px;top:541.5px;" width="5" height="8" viewBox="0 0 5 8"><path d="M.5 .5V7.5L4.5 4z" fill="#6a6a6a"/></svg>
<div class="t " style="left:1689px;top:540px;"><i class="kas">Y:</i></div>
<div class="t " style="right:148px;top:540px;"><i class="kag">1.000</i></div>
<div class="w menu" style="left:1797px;top:516px;width:115px;height:20px;"></div>
<div class="t tw" style="left:1805px;top:521px;"><i class="kav">24 </i><i class="kaw">fps</i></div>
<svg style="left:1901px;top:518px;" width="9" height="16" viewBox="0 0 9 16"><path d="M4.5 1.3L7.2 6.8H1.8zM4.5 14.7L7.2 9.2H1.8z" fill="#c4c4c4"/></svg>
<div class="t " style="left:1805px;top:541px;"><i class="kx">Time </i><i class="kar">Remapping:</i></div>
<div class="w num rl" style="left:1797px;top:556px;width:57px;height:20px;"></div>
<svg style="left:1804px;top:562.0px;" width="5" height="8" viewBox="0 0 5 8"><path d="M4.5 .5V7.5L.5 4z" fill="#6a6a6a"/></svg>
<svg style="left:1842px;top:562.0px;" width="5" height="8" viewBox="0 0 5 8"><path d="M.5 .5V7.5L4.5 4z" fill="#6a6a6a"/></svg>
<div class="t " style="right:83px;top:561px;"><i class="kax">:100</i></div>
<div class="w num rr" style="left:1853px;top:556px;width:59px;height:20px;"></div>
<svg style="left:1860px;top:562.0px;" width="5" height="8" viewBox="0 0 5 8"><path d="M4.5 .5V7.5L.5 4z" fill="#6a6a6a"/></svg>
<svg style="left:1900px;top:562.0px;" width="5" height="8" viewBox="0 0 5 8"><path d="M.5 .5V7.5L4.5 4z" fill="#6a6a6a"/></svg>
<div class="t " style="right:24px;top:561px;"><i class="kg">: </i><i class="kae">100</i></div>
<div class="w opt" style="left:1677px;top:561px;width:14px;height:14px;"></div>
<div class="t " style="left:1699px;top:563px;"><i class="kay">Bord</i></div>
<div class="w opt" style="left:1738px;top:561px;width:14px;height:14px;opacity:.55;"></div>
<div class="t " style="left:1760px;top:563px;color:#4a4a4a"><i class="kb">Crop</i></div>
<div class="hl" style="left:1671px;top:585px;width:244px"></div>
<svg style="left:1679px;top:593px;" width="9" height="9" viewBox="0 0 9 9"><path d="M.3 .8H8.7L4.5 8.6z" fill="#1a1a1a"/></svg>
<div class="w opt" style="left:1691px;top:591px;width:14px;height:14px;"></div>
<svg style="left:1691px;top:589px;" width="16" height="16" viewBox="0 0 16 16"><path d="M3 7.6L6.3 11.6L13.3 2.6" fill="none" stroke="#f2f2f2" stroke-width="1.8" stroke-linecap="round" stroke-linejoin="round"/></svg>
<div class="t ph" style="left:1711px;top:591px;"><i class="kap">Anti-Aliasing</i></div>
<svg style="left:1899px;top:597px;shape-rendering:crispEdges" width="11" height="6" viewBox="0 0 11 6"><rect x="0" y="0" width="1" height="1" fill="#3a3a3a"/><rect x="0" y="1" width="1" height="1" fill="#c8c8c8"/><rect x="0" y="3" width="1" height="1" fill="#3a3a3a"/><rect x="0" y="4" width="1" height="1" fill="#c8c8c8"/><rect x="3" y="0" width="1" height="1" fill="#3a3a3a"/><rect x="3" y="1" width="1" height="1" fill="#c8c8c8"/><rect x="3" y="3" width="1" height="1" fill="#3a3a3a"/><rect x="3" y="4" width="1" height="1" fill="#c8c8c8"/><rect x="6" y="0" width="1" height="1" fill="#3a3a3a"/><rect x="6" y="1" width="1" height="1" fill="#c8c8c8"/><rect x="6" y="3" width="1" height="1" fill="#3a3a3a"/><rect x="6" y="4" width="1" height="1" fill="#c8c8c8"/><rect x="9" y="0" width="1" height="1" fill="#3a3a3a"/><rect x="9" y="1" width="1" height="1" fill="#c8c8c8"/><rect x="9" y="3" width="1" height="1" fill="#3a3a3a"/><rect x="9" y="4" width="1" height="1" fill="#c8c8c8"/></svg>
<div class="w radio rl" style="left:1674px;top:618px;width:28px;height:20px;"></div>
<div class="t tw" style="left:1588px;width:200px;text-align:center;top:623px;"><i class="kae">5</i></div>
<div class="w radio sel rn" style="left:1701px;top:618px;width:29px;height:20px;"></div>
<div class="t " style="left:1616px;width:200px;text-align:center;top:623px;text-shadow:none"><i class="kae">8</i></div>
<div class="w radio rn" style="left:1729px;top:618px;width:29px;height:20px;"></div>
<div class="t tw" style="left:1643.5px;width:200px;text-align:center;top:623px;"><i class="kae">11</i></div>
<div class="w radio rr" style="left:1757px;top:618px;width:32px;height:20px;"></div>
<div class="t tw" style="left:1673px;width:200px;text-align:center;top:623px;"><i class="kae">16</i></div>
<div class="w menu" style="left:1797px;top:618px;width:115px;height:20px;"></div>
<div class="t tw" style="left:1805px;top:623px;"><i class="kaz">Mitchell-Netravali</i></div>
<svg style="left:1901px;top:620px;" width="9" height="16" viewBox="0 0 9 16"><path d="M4.5 1.3L7.2 6.8H1.8zM4.5 14.7L7.2 9.2H1.8z" fill="#c4c4c4"/></svg>
<div class="w opt" style="left:1677px;top:643px;width:14px;height:14px;"></div>
<div class="t " style="left:1699px;top:645px;"><i class="km">Full </i><i class="ki">Sample</i></div>
<div class="w num" style="left:1797px;top:640px;width:115px;height:20px;"></div>
<svg style="left:1804px;top:646.0px;" width="5" height="8" viewBox="0 0 5 8"><path d="M4.5 .5V7.5L.5 4z" fill="#6a6a6a"/></svg>
<svg style="left:1900px;top:646.0px;" width="5" height="8" viewBox="0 0 5 8"><path d="M.5 .5V7.5L4.5 4z" fill="#6a6a6a"/></svg>
<div class="t " style="left:1813px;top:645px;"><i class="kao">Size:</i></div>
<div class="t " style="right:24px;top:645px;"><i class="kav">1.000 </i><i class="kar">px</i></div>
<div class="hl" style="left:1671px;top:667px;width:244px"></div>
<svg style="left:1679px;top:675px;" width="9" height="9" viewBox="0 0 9 9"><path d="M.8 .3V8.7L8.4 4.5z" fill="#1a1a1a"/></svg>
<div class="w opt" style="left:1691px;top:673px;width:14px;height:14px;"></div>
<div class="t ph" style="left:1711px;top:673px;"><i class="kx">Sampled </i><i class="ky">Motion </i><i class="kt">Blur</i></div>
<svg style="left:1899px;top:679px;shape-rendering:crispEdges" width="11" height="6" viewBox="0 0 11 6"><rect x="0" y="0" width="1" height="1" fill="#3a3a3a"/><rect x="0" y="1" width="1" height="1" fill="#c8c8c8"/><rect x="0" y="3" width="1" height="1" fill="#3a3a3a"/><rect x="0" y="4" width="1" height="1" fill="#c8c8c8"/><rect x="3" y="0" width="1" height="1" fill="#3a3a3a"/><rect x="3" y="1" width="1" height="1" fill="#c8c8c8"/><rect x="3" y="3" width="1" height="1" fill="#3a3a3a"/><rect x="3" y="4" width="1" height="1" fill="#c8c8c8"/><rect x="6" y="0" width="1" height="1" fill="#3a3a3a"/><rect x="6" y="1" width="1" height="1" fill="#c8c8c8"/><rect x="6" y="3" width="1" height="1" fill="#3a3a3a"/><rect x="6" y="4" width="1" height="1" fill="#c8c8c8"/><rect x="9" y="0" width="1" height="1" fill="#3a3a3a"/><rect x="9" y="1" width="1" height="1" fill="#c8c8c8"/><rect x="9" y="3" width="1" height="1" fill="#3a3a3a"/><rect x="9" y="4" width="1" height="1" fill="#c8c8c8"/></svg>
<div class="hl" style="left:1671px;top:691px;width:244px"></div>
<svg style="left:1679px;top:699px;" width="9" height="9" viewBox="0 0 9 9"><path d="M.8 .3V8.7L8.4 4.5z" fill="#1a1a1a"/></svg>
<div class="t ph" style="left:1691px;top:697px;"><i class="kz">Shading</i></div>
<svg style="left:1899px;top:703px;shape-rendering:crispEdges" width="11" height="6" viewBox="0 0 11 6"><rect x="0" y="0" width="1" height="1" fill="#3a3a3a"/><rect x="0" y="1" width="1" height="1" fill="#c8c8c8"/><rect x="0" y="3" width="1" height="1" fill="#3a3a3a"/><rect x="0" y="4" width="1" height="1" fill="#c8c8c8"/><rect x="3" y="0" width="1" height="1" fill="#3a3a3a"/><rect x="3" y="1" width="1" height="1" fill="#c8c8c8"/><rect x="3" y="3" width="1" height="1" fill="#3a3a3a"/><rect x="3" y="4" width="1" height="1" fill="#c8c8c8"/><rect x="6" y="0" width="1" height="1" fill="#3a3a3a"/><rect x="6" y="1" width="1" height="1" fill="#c8c8c8"/><rect x="6" y="3" width="1" height="1" fill="#3a3a3a"/><rect x="6" y="4" width="1" height="1" fill="#c8c8c8"/><rect x="9" y="0" width="1" height="1" fill="#3a3a3a"/><rect x="9" y="1" width="1" height="1" fill="#c8c8c8"/><rect x="9" y="3" width="1" height="1" fill="#3a3a3a"/><rect x="9" y="4" width="1" height="1" fill="#c8c8c8"/></svg>
<div class="hl" style="left:1671px;top:715px;width:244px"></div>
<svg style="left:1679px;top:723px;" width="9" height="9" viewBox="0 0 9 9"><path d="M.8 .3V8.7L8.4 4.5z" fill="#1a1a1a"/></svg>
<div class="t ph" style="left:1691px;top:721px;"><i class="kh">Performance</i></div>
<svg style="left:1899px;top:727px;shape-rendering:crispEdges" width="11" height="6" viewBox="0 0 11 6"><rect x="0" y="0" width="1" height="1" fill="#3a3a3a"/><rect x="0" y="1" width="1" height="1" fill="#c8c8c8"/><rect x="0" y="3" width="1" height="1" fill="#3a3a3a"/><rect x="0" y="4" width="1" height="1" fill="#c8c8c8"/><rect x="3" y="0" width="1" height="1" fill="#3a3a3a"/><rect x="3" y="1" width="1" height="1" fill="#c8c8c8"/><rect x="3" y="3" width="1" height="1" fill="#3a3a3a"/><rect x="3" y="4" width="1" height="1" fill="#c8c8c8"/><rect x="6" y="0" width="1" height="1" fill="#3a3a3a"/><rect x="6" y="1" width="1" height="1" fill="#c8c8c8"/><rect x="6" y="3" width="1" height="1" fill="#3a3a3a"/><rect x="6" y="4" width="1" height="1" fill="#c8c8c8"/><rect x="9" y="0" width="1" height="1" fill="#3a3a3a"/><rect x="9" y="1" width="1" height="1" fill="#c8c8c8"/><rect x="9" y="3" width="1" height="1" fill="#3a3a3a"/><rect x="9" y="4" width="1" height="1" fill="#c8c8c8"/></svg>
<div class="hl" style="left:1671px;top:739px;width:244px"></div>
<svg style="left:1679px;top:747px;" width="9" height="9" viewBox="0 0 9 9"><path d="M.8 .3V8.7L8.4 4.5z" fill="#1a1a1a"/></svg>
<div class="t ph" style="left:1691px;top:745px;"><i class="kn">Post </i><i class="ko">Processing</i></div>
<svg style="left:1899px;top:751px;shape-rendering:crispEdges" width="11" height="6" viewBox="0 0 11 6"><rect x="0" y="0" width="1" height="1" fill="#3a3a3a"/><rect x="0" y="1" width="1" height="1" fill="#c8c8c8"/><rect x="0" y="3" width="1" height="1" fill="#3a3a3a"/><rect x="0" y="4" width="1" height="1" fill="#c8c8c8"/><rect x="3" y="0" width="1" height="1" fill="#3a3a3a"/><rect x="3" y="1" width="1" height="1" fill="#c8c8c8"/><rect x="3" y="3" width="1" height="1" fill="#3a3a3a"/><rect x="3" y="4" width="1" height="1" fill="#c8c8c8"/><rect x="6" y="0" width="1" height="1" fill="#3a3a3a"/><rect x="6" y="1" width="1" height="1" fill="#c8c8c8"/><rect x="6" y="3" width="1" height="1" fill="#3a3a3a"/><rect x="6" y="4" width="1" height="1" fill="#c8c8c8"/><rect x="9" y="0" width="1" height="1" fill="#3a3a3a"/><rect x="9" y="1" width="1" height="1" fill="#c8c8c8"/><rect x="9" y="3" width="1" height="1" fill="#3a3a3a"/><rect x="9" y="4" width="1" height="1" fill="#c8c8c8"/></svg>
<div class="hl" style="left:1671px;top:763px;width:244px"></div>
<svg style="left:1679px;top:771px;" width="9" height="9" viewBox="0 0 9 9"><path d="M.8 .3V8.7L8.4 4.5z" fill="#1a1a1a"/></svg>
<div class="w opt" style="left:1691px;top:769px;width:14px;height:14px;"></div>
<div class="t ph" style="left:1711px;top:769px;"><i class="kg">Stamp</i></div>
<svg style="left:1899px;top:775px;shape-rendering:crispEdges" width="11" height="6" viewBox="0 0 11 6"><rect x="0" y="0" width="1" height="1" fill="#3a3a3a"/><rect x="0" y="1" width="1" height="1" fill="#c8c8c8"/><rect x="0" y="3" width="1" height="1" fill="#3a3a3a"/><rect x="0" y="4" width="1" height="1" fill="#c8c8c8"/><rect x="3" y="0" width="1" height="1" fill="#3a3a3a"/><rect x="3" y="1" width="1" height="1" fill="#c8c8c8"/><rect x="3" y="3" width="1" height="1" fill="#3a3a3a"/><rect x="3" y="4" width="1" height="1" fill="#c8c8c8"/><rect x="6" y="0" width="1" height="1" fill="#3a3a3a"/><rect x="6" y="1" width="1" height="1" fill="#c8c8c8"/><rect x="6" y="3" width="1" height="1" fill="#3a3a3a"/><rect x="6" y="4" width="1" height="1" fill="#c8c8c8"/><rect x="9" y="0" width="1" height="1" fill="#3a3a3a"/><rect x="9" y="1" width="1" height="1" fill="#c8c8c8"/><rect x="9" y="3" width="1" height="1" fill="#3a3a3a"/><rect x="9" y="4" width="1" height="1" fill="#c8c8c8"/></svg>
<div class="hl" style="left:1671px;top:787px;width:244px"></div>
<svg style="left:1679px;top:795px;" width="9" height="9" viewBox="0 0 9 9"><path d="M.3 .8H8.7L4.5 8.6z" fill="#1a1a1a"/></svg>
<div class="t ph" style="left:1691px;top:793px;"><i class="kak">Output</i></div>
<svg style="left:1899px;top:799px;shape-rendering:crispEdges" width="11" height="6" viewBox="0 0 11 6"><rect x="0" y="0" width="1" height="1" fill="#3a3a3a"/><rect x="0" y="1" width="1" height="1" fill="#c8c8c8"/><rect x="0" y="3" width="1" height="1" fill="#3a3a3a"/><rect x="0" y="4" width="1" height="1" fill="#c8c8c8"/><rect x="3" y="0" width="1" height="1" fill="#3a3a3a"/><rect x="3" y="1" width="1" height="1" fill="#c8c8c8"/><rect x="3" y="3" width="1" height="1" fill="#3a3a3a"/><rect x="3" y="4" width="1" height="1" fill="#c8c8c8"/><rect x="6" y="0" width="1" height="1" fill="#3a3a3a"/><rect x="6" y="1" width="1" height="1" fill="#c8c8c8"/><rect x="6" y="3" width="1" height="1" fill="#3a3a3a"/><rect x="6" y="4" width="1" height="1" fill="#c8c8c8"/><rect x="9" y="0" width="1" height="1" fill="#3a3a3a"/><rect x="9" y="1" width="1" height="1" fill="#c8c8c8"/><rect x="9" y="3" width="1" height="1" fill="#3a3a3a"/><rect x="9" y="4" width="1" height="1" fill="#c8c8c8"/></svg>
<div class="w txt rl" style="left:1674px;top:820px;width:218px;height:20px;"></div>
<div class="t " style="left:1681px;top:825px;"><i class="kaf">/tmp\</i></div>
<div class="w tool rr" style="left:1891px;top:820px;width:21px;height:20px;"></div>
<svg style="left:1893px;top:822px;" width="16" height="16" viewBox="0 0 16 16"><rect x="6" y="1.5" width="7.5" height="6" fill="#f4f4f4" stroke="#333" stroke-width=".8"/><path d="M8 3.5H12M8 5.5H12" stroke="#888" stroke-width=".8"/><path d="M1.5 5.5H6L7.5 7.5H14.5V14.5H1.5z" fill="#e8d48a" stroke="#5a4a10" stroke-width="1" stroke-linejoin="round"/></svg>
<div class="w opt" style="left:1677px;top:848px;width:14px;height:14px;"></div>
<svg style="left:1677px;top:846px;" width="16" height="16" viewBox="0 0 16 16"><path d="M3 7.6L6.3 11.6L13.3 2.6" fill="none" stroke="#f2f2f2" stroke-width="1.8" stroke-linecap="round" stroke-linejoin="round"/></svg>
<div class="t " style="left:1699px;top:850px;"><i class="ko">Overwrite</i></div>
<div class="w opt" style="left:1800px;top:848px;width:14px;height:14px;"></div>
<svg style="left:1800px;top:846px;" width="16" height="16" viewBox="0 0 16 16"><path d="M3 7.6L6.3 11.6L13.3 2.6" fill="none" stroke="#f2f2f2" stroke-width="1.8" stroke-linecap="round" stroke-linejoin="round"/></svg>
<div class="t " style="left:1822px;top:850px;"><i class="kah">File </i><i class="kam">Extensions</i></div>
<div class="w opt" style="left:1677px;top:870px;width:14px;height:14px;"></div>
<div class="t " style="left:1699px;top:872px;"><i class="kv">Placeholders</i></div>
<div class="w opt" style="left:1800px;top:870px;width:14px;height:14px;"></div>
<div class="t " style="left:1822px;top:872px;"><i class="kaq">Cache </i><i class="kv">Result</i></div>
<div class="w menu" style="left:1674px;top:892px;width:115px;height:20px;"></div>
<svg style="left:1678px;top:894px;" width="16" height="16" viewBox="0 0 16 16"><path d="M2.5 1.5H10.5L13.5 4.5V14.5H2.5z" fill="#f6f6f6" stroke="#222" stroke-width="1"/><rect x="3.5" y="5" width="9" height="4" fill="#e8a0a0"/><rect x="3.5" y="9" width="9" height="4.5" fill="#4a5aa8"/><circle cx="9.5" cy="7" r="1.4" fill="#fff"/></svg>
<div class="t tw" style="left:1697px;top:897px;"><i class="ko">PNG</i></div>
<svg style="left:1778px;top:894px;" width="9" height="16" viewBox="0 0 9 16"><path d="M4.5 1.3L7.2 6.8H1.8zM4.5 14.7L7.2 9.2H1.8z" fill="#c4c4c4"/></svg>
<div class="w radio rl" style="left:1797px;top:892px;width:38px;height:20px;"></div>
<div class="t tw" style="left:1716px;width:200px;text-align:center;top:897px;"><i class="ki">BW</i></div>
<div class="w radio rn" style="left:1834px;top:892px;width:39px;height:20px;"></div>
<div class="t tw" style="left:1753.5px;width:200px;text-align:center;top:897px;"><i class="kaj">RGB</i></div>
<div class="w radio sel rr" style="left:1872px;top:892px;width:40px;height:20px;"></div>
<div class="t " style="left:1792px;width:200px;text-align:center;top:897px;text-shadow:none"><i class="ks">RGBA</i></div>
<div class="t " style="left:1681px;top:919px;"><i class="kz">Color </i><i class="kay">Depth:</i></div>
<div class="w radio sel rl" style="left:1758px;top:914px;width:77px;height:20px;"></div>
<div class="t " style="left:1696.5px;width:200px;text-align:center;top:919px;text-shadow:none"><i class="kae">8</i></div>
<div class="w radio rr" style="left:1834px;top:914px;width:78px;height:20px;"></div>
<div class="t tw" style="left:1773px;width:200px;text-align:center;top:919px;"><i class="kae">16</i></div>
<div class="w num" style="left:1674px;top:936px;width:238px;height:20px;background:linear-gradient(#a0a0a0,#b4b4b4)"><div style="position:absolute;left:0;top:0;width:42px;height:100%;background:linear-gradient(#6e6e6e,#808080)"></div></div>
<div class="t " style="left:1688px;top:941px;"><i class="kba">Compression:</i></div>
<div class="t " style="right:24px;top:941px;"><i class="kat">15%</i></div>
<div class="hl" style="left:1671px;top:965px;width:244px"></div>
<svg style="left:1679px;top:973px;" width="9" height="9" viewBox="0 0 9 9"><path d="M.8 .3V8.7L8.4 4.5z" fill="#1a1a1a"/></svg>
<div class="t ph" style="left:1691px;top:971px;"><i class="kbb">Bake</i></div>
<svg style="left:1899px;top:977px;shape-rendering:crispEdges" width="11" height="6" viewBox="0 0 11 6"><rect x="0" y="0" width="1" height="1" fill="#3a3a3a"/><rect x="0" y="1" width="1" height="1" fill="#c8c8c8"/><rect x="0" y="3" width="1" height="1" fill="#3a3a3a"/><rect x="0" y="4" width="1" height="1" fill="#c8c8c8"/><rect x="3" y="0" width="1" height="1" fill="#3a3a3a"/><rect x="3" y="1" width="1" height="1" fill="#c8c8c8"/><rect x="3" y="3" width="1" height="1" fill="#3a3a3a"/><rect x="3" y="4" width="1" height="1" fill="#c8c8c8"/><rect x="6" y="0" width="1" height="1" fill="#3a3a3a"/><rect x="6" y="1" width="1" height="1" fill="#c8c8c8"/><rect x="6" y="3" width="1" height="1" fill="#3a3a3a"/><rect x="6" y="4" width="1" height="1" fill="#c8c8c8"/><rect x="9" y="0" width="1" height="1" fill="#3a3a3a"/><rect x="9" y="1" width="1" height="1" fill="#c8c8c8"/><rect x="9" y="3" width="1" height="1" fill="#3a3a3a"/><rect x="9" y="4" width="1" height="1" fill="#c8c8c8"/></svg>
<div class="hl" style="left:1671px;top:989px;width:244px"></div>
<svg style="left:1679px;top:997px;" width="9" height="9" viewBox="0 0 9 9"><path d="M.8 .3V8.7L8.4 4.5z" fill="#1a1a1a"/></svg>
<div class="w opt" style="left:1691px;top:995px;width:14px;height:14px;"></div>
<div class="t ph" style="left:1711px;top:995px;"><i class="kw">Freestyle</i></div>
<svg style="left:1899px;top:1001px;shape-rendering:crispEdges" width="11" height="6" viewBox="0 0 11 6"><rect x="0" y="0" width="1" height="1" fill="#3a3a3a"/><rect x="0" y="1" width="1" height="1" fill="#c8c8c8"/><rect x="0" y="3" width="1" height="1" fill="#3a3a3a"/><rect x="0" y="4" width="1" height="1" fill="#c8c8c8"/><rect x="3" y="0" width="1" height="1" fill="#3a3a3a"/><rect x="3" y="1" width="1" height="1" fill="#c8c8c8"/><rect x="3" y="3" width="1" height="1" fill="#3a3a3a"/><rect x="3" y="4" width="1" height="1" fill="#c8c8c8"/><rect x="6" y="0" width="1" height="1" fill="#3a3a3a"/><rect x="6" y="1" width="1" height="1" fill="#c8c8c8"/><rect x="6" y="3" width="1" height="1" fill="#3a3a3a"/><rect x="6" y="4" width="1" height="1" fill="#c8c8c8"/><rect x="9" y="0" width="1" height="1" fill="#3a3a3a"/><rect x="9" y="1" width="1" height="1" fill="#c8c8c8"/><rect x="9" y="3" width="1" height="1" fill="#3a3a3a"/><rect x="9" y="4" width="1" height="1" fill="#c8c8c8"/></svg>
<svg style="left:1667px;top:1066px;" width="14" height="14" viewBox="0 0 14 14"><g fill="none" stroke-width="1"><path d="M0 10L4 14" stroke="#9a9a9a"/><path d="M0 11L3 14" stroke="#3c3c3c"/><path d="M0 6L8 14" stroke="#9a9a9a"/><path d="M0 7L7 14" stroke="#3c3c3c"/><path d="M0 2L12 14" stroke="#9a9a9a"/><path d="M0 3L11 14" stroke="#3c3c3c"/></g></svg>
</div></body></html>
